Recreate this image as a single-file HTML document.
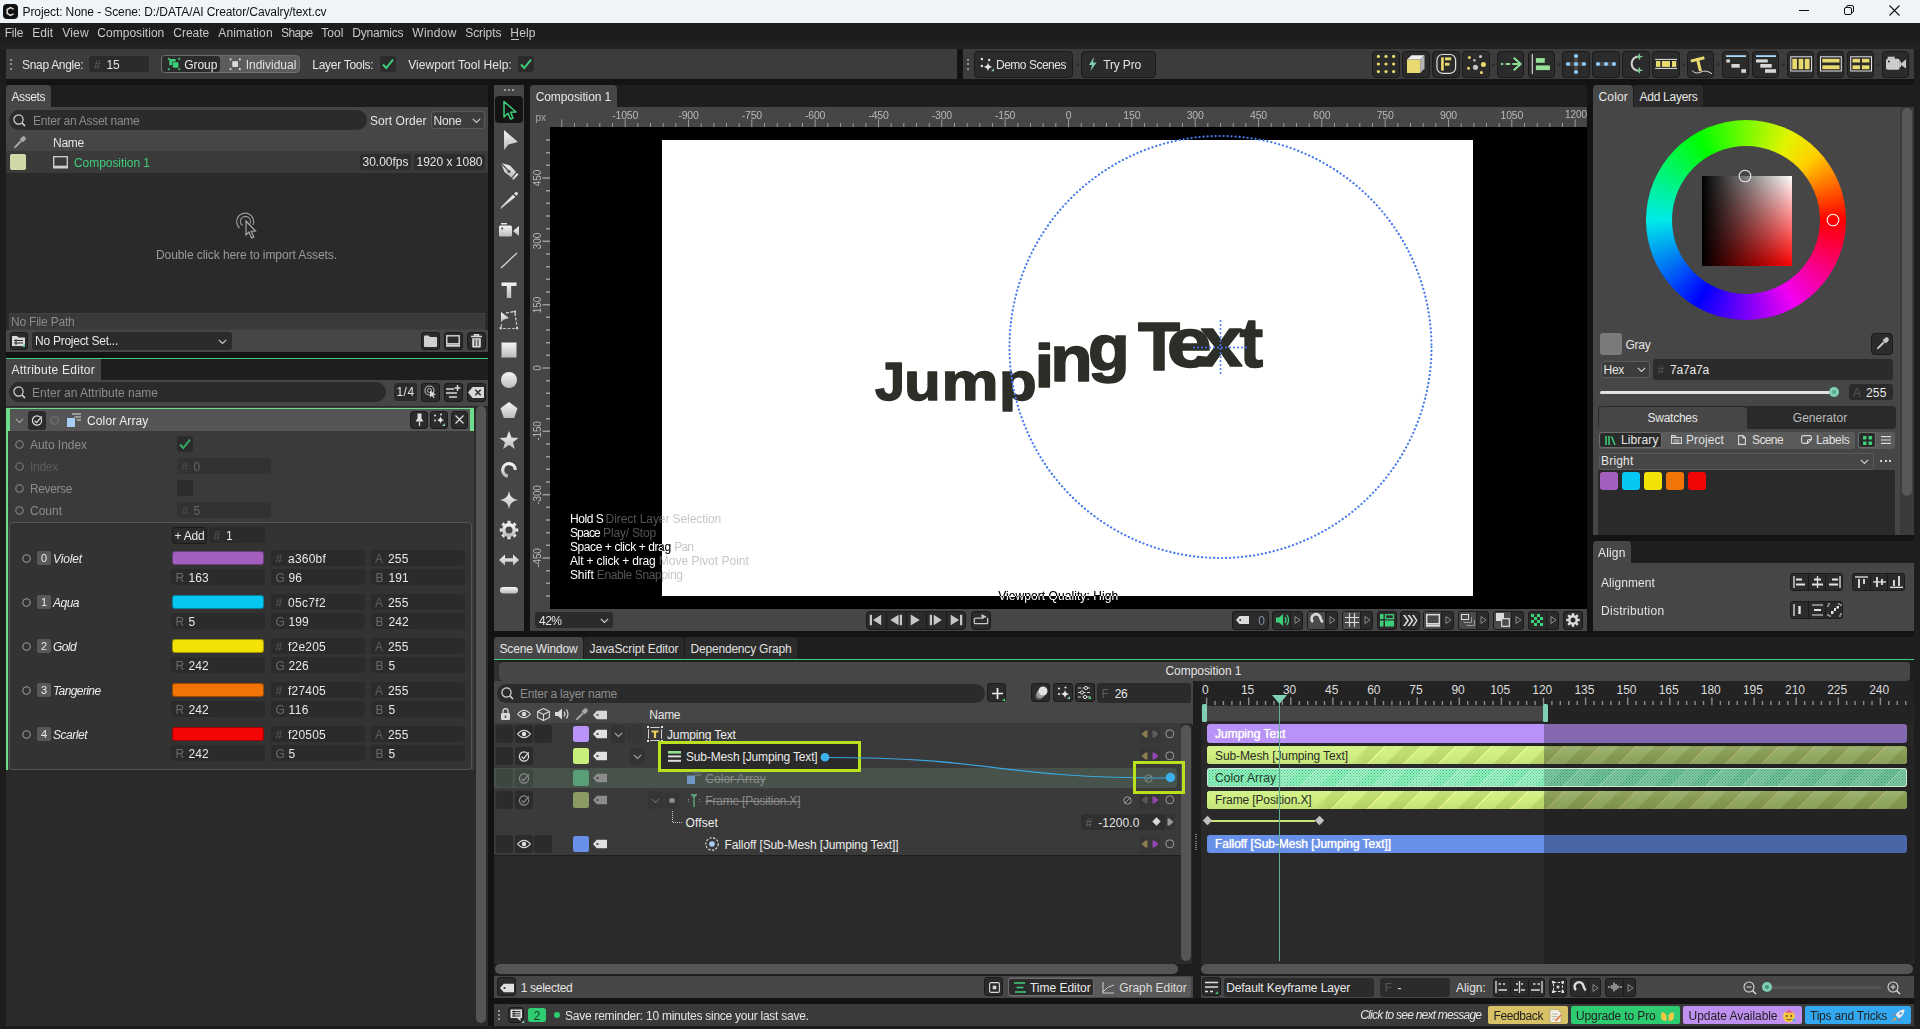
<!DOCTYPE html>
<html><head><meta charset="utf-8"><title>Cavalry</title>
<style>
html,body{margin:0;padding:0;}
body{width:1920px;height:1029px;overflow:hidden;background:#1d1d1d;font-family:"Liberation Sans",sans-serif;position:relative;}
div,svg,span.t{position:absolute;box-sizing:border-box;}
span.t{white-space:nowrap;}
svg{overflow:visible;}
</style></head>
<body>
<div style="left:0px;top:0px;width:1920px;height:23px;background:#eff4f9;"></div>
<div style="left:3px;top:4px;width:15px;height:15px;background:#111;border-radius:4px;"></div>
<svg style="left:3px;top:4px;" width="15" height="15" viewBox="0 0 15 15"><path d="M10.6 5.2 L7.5 3.6 L4.2 5.5 V9.5 L7.5 11.4 L10.6 9.8" fill="none" stroke="#ddd" stroke-width="1.5"/></svg>
<span class="t" style="left:22.50px;top:3.50px;font-size:12px;line-height:16px;color:#111;letter-spacing:-0.099px;">Project: None - Scene: D:/DATA/AI Creator/Cavalry/text.cv</span>
<svg style="left:1799px;top:10px;" width="10" height="1" viewBox="0 0 10 1"><rect width="10" height="1" fill="#111"/></svg>
<svg style="left:1844px;top:5px;" width="10" height="10" viewBox="0 0 10 10"><rect x="0.5" y="2.5" width="7" height="7" rx="1.5" fill="none" stroke="#111"/><path d="M2.5 2.5 V2 Q2.5 .5 4 .5 H8 Q9.5 .5 9.5 2 V6 Q9.5 7.5 8 7.5 H7.5" fill="none" stroke="#111"/></svg>
<svg style="left:1889px;top:4.5px;" width="11" height="11" viewBox="0 0 11 11"><path d="M.5 .5 L10.5 10.5 M10.5 .5 L.5 10.5" stroke="#111" stroke-width="1.1" fill="none"/></svg>
<div style="left:0px;top:23px;width:1920px;height:20px;background:#1d1d1d;"></div>
<div style="left:0px;top:43px;width:1920px;height:6px;background:#222;"></div>
<span class="t" style="left:4.70px;top:24.50px;font-size:12px;line-height:16px;color:#c9c9c9;letter-spacing:-0.186px;">File</span>
<span class="t" style="left:32.30px;top:24.50px;font-size:12px;line-height:16px;color:#c9c9c9;letter-spacing:0.003px;">Edit</span>
<span class="t" style="left:62.30px;top:24.50px;font-size:12px;line-height:16px;color:#c9c9c9;letter-spacing:0.151px;">View</span>
<span class="t" style="left:97.30px;top:24.50px;font-size:12px;line-height:16px;color:#c9c9c9;letter-spacing:0.027px;">Composition</span>
<span class="t" style="left:173.30px;top:24.50px;font-size:12px;line-height:16px;color:#c9c9c9;letter-spacing:-0.005px;">Create</span>
<span class="t" style="left:218.30px;top:24.50px;font-size:12px;line-height:16px;color:#c9c9c9;letter-spacing:0.114px;">Animation</span>
<span class="t" style="left:281.00px;top:24.50px;font-size:12px;line-height:16px;color:#c9c9c9;letter-spacing:-0.601px;">Shape</span>
<span class="t" style="left:321.30px;top:24.50px;font-size:12px;line-height:16px;color:#c9c9c9;letter-spacing:-0.004px;">Tool</span>
<span class="t" style="left:352.30px;top:24.50px;font-size:12px;line-height:16px;color:#c9c9c9;letter-spacing:-0.211px;">Dynamics</span>
<span class="t" style="left:412.30px;top:24.50px;font-size:12px;line-height:16px;color:#c9c9c9;letter-spacing:0.285px;">Window</span>
<span class="t" style="left:465.30px;top:24.50px;font-size:12px;line-height:16px;color:#c9c9c9;letter-spacing:-0.098px;">Scripts</span>
<span class="t" style="left:510.30px;top:24.50px;font-size:12px;line-height:16px;color:#c9c9c9;letter-spacing:0.178px;">Help</span>
<div style="left:510.5px;top:39px;width:8px;height:1px;background:#c9c9c9;"></div>
<div style="left:6px;top:49px;width:951px;height:29.6px;background:#3c3c3c;"></div>
<div style="left:10.2px;top:59.3px;width:2px;height:2px;background:#909090;"></div>
<div style="left:10.2px;top:63.4px;width:2px;height:2px;background:#909090;"></div>
<div style="left:10.2px;top:67.5px;width:2px;height:2px;background:#909090;"></div>
<span class="t" style="left:22.00px;top:56.50px;font-size:12px;line-height:16px;color:#e4e4e4;letter-spacing:-0.312px;">Snap Angle:</span>
<div style="left:89px;top:56px;width:60px;height:16px;background:#2b2b2b;border-radius:3px;"></div>
<span class="t" style="left:94.00px;top:56.50px;font-size:12px;line-height:16px;color:#5e5e5e;letter-spacing:-0.167px;">#</span>
<span class="t" style="left:106.50px;top:56.50px;font-size:12px;line-height:16px;color:#e4e4e4;letter-spacing:-0.280px;">15</span>
<div style="left:161px;top:55px;width:139.3px;height:18px;background:#5c5c5c;border-radius:4px;border:1px solid #6e6e6e;"></div>
<div style="left:162px;top:56px;width:58px;height:16px;background:#2b2b2b;border-radius:3px;"></div>
<svg style="left:0px;top:0px;" width="1920" height="1029" viewBox="0 0 1920 1029"><rect x="167.9" y="57.9" width="1.8" height="1.8" fill="#3ecf7a"/><rect x="167.9" y="68.3" width="1.8" height="1.8" fill="#3ecf7a"/><rect x="178.3" y="57.9" width="1.8" height="1.8" fill="#3ecf7a"/><rect x="178.3" y="68.3" width="1.8" height="1.8" fill="#3ecf7a"/><rect x="169.3" y="59" width="6.3" height="6.2" fill="#3ecf7a"/><rect x="172.5" y="62" width="6.3" height="6" fill="#3ecf7a" stroke="#2b2b2b" stroke-width=".6"/></svg>
<span class="t" style="left:184.30px;top:56.50px;font-size:12px;line-height:16px;color:#e8e8e8;letter-spacing:-0.072px;">Group</span>
<svg style="left:0px;top:0px;" width="1920" height="1029" viewBox="0 0 1920 1029"><rect x="229.6" y="58.5" width="1.8" height="1.8" fill="#e0e0e0"/><rect x="229.6" y="68.2" width="1.8" height="1.8" fill="#e0e0e0"/><rect x="238.9" y="58.5" width="1.8" height="1.8" fill="#e0e0e0"/><rect x="238.9" y="68.2" width="1.8" height="1.8" fill="#e0e0e0"/><rect x="232.3" y="61.2" width="5.7" height="5.7" fill="#dcdcdc"/></svg>
<span class="t" style="left:245.70px;top:56.50px;font-size:12px;line-height:16px;color:#e0e0e0;letter-spacing:-0.010px;">Individual</span>
<span class="t" style="left:312.30px;top:56.50px;font-size:12px;line-height:16px;color:#e4e4e4;letter-spacing:-0.290px;">Layer Tools:</span>
<div style="left:380px;top:56px;width:16px;height:16px;background:#2b2b2b;border-radius:3px;"></div>
<svg style="left:380px;top:56px;" width="16" height="16" viewBox="0 0 16 16"><path d="M3 8.5 L6.3 12 L13 3.6" fill="none" stroke="#3ecf7a" stroke-width="2"/></svg>
<span class="t" style="left:408.30px;top:56.50px;font-size:12px;line-height:16px;color:#e4e4e4;letter-spacing:0.024px;">Viewport Tool Help:</span>
<div style="left:518px;top:56px;width:16px;height:16px;background:#2b2b2b;border-radius:3px;"></div>
<svg style="left:518px;top:56px;" width="16" height="16" viewBox="0 0 16 16"><path d="M3 8.5 L6.3 12 L13 3.6" fill="none" stroke="#3ecf7a" stroke-width="2"/></svg>
<div style="left:957px;top:49px;width:6px;height:29.6px;background:#131313;"></div>
<div style="left:963px;top:49px;width:951px;height:29.6px;background:#3c3c3c;"></div>
<div style="left:966.8px;top:59.3px;width:2px;height:2px;background:#909090;"></div>
<div style="left:966.8px;top:63.4px;width:2px;height:2px;background:#909090;"></div>
<div style="left:966.8px;top:67.5px;width:2px;height:2px;background:#909090;"></div>
<div style="left:974.2px;top:50.5px;width:99.3px;height:27px;background:#2b2b2b;border-radius:4px;border:1px solid #1b1b1b;"></div>
<svg style="left:0px;top:0px;" width="1920" height="1029" viewBox="0 0 1920 1029"><circle cx="981.9" cy="58.9" r="1.25" fill="#ddd"/><circle cx="989.1" cy="60" r="1.25" fill="#ddd"/><circle cx="981.9" cy="66.1" r="1.25" fill="#ddd"/><path d="M988 62.6 Q988.5 66.4 992.3 66.9 Q988.5 67.4 988 71.2 Q987.5 67.4 983.7 66.9 Q987.5 66.4 988 62.6Z" fill="#e4e4e4"/><path d="M994 68.2v3h-3z" fill="#7ecfb3"/></svg>
<span class="t" style="left:996.00px;top:56.50px;font-size:12px;line-height:16px;color:#e4e4e4;letter-spacing:-0.489px;">Demo Scenes</span>
<svg style="left:0px;top:0px;" width="1920" height="1029" viewBox="0 0 1920 1029"><circle cx="1077.5" cy="64.4" r="1.3" fill="#2a2a2a"/></svg>
<div style="left:1081px;top:50.5px;width:74.5px;height:27px;background:#2b2b2b;border-radius:4px;border:1px solid #1b1b1b;"></div>
<svg style="left:1088px;top:57px;" width="9" height="14" viewBox="0 0 9 14"><path d="M6 0 L1 8 H4 L2.5 14 L8.5 5.5 H5 Z" fill="#7ecfb3"/></svg>
<span class="t" style="left:1103.30px;top:56.50px;font-size:12px;line-height:16px;color:#e4e4e4;letter-spacing:-0.170px;">Try Pro</span>
<div style="left:1372.3px;top:50.5px;width:27.3px;height:27px;background:#2b2b2b;border-radius:4px;border:1px solid #1b1b1b;"></div>
<div style="left:1402.3px;top:50.5px;width:27.3px;height:27px;background:#2b2b2b;border-radius:4px;border:1px solid #1b1b1b;"></div>
<div style="left:1432.3px;top:50.5px;width:27.3px;height:27px;background:#2b2b2b;border-radius:4px;border:1px solid #1b1b1b;"></div>
<div style="left:1462.3px;top:50.5px;width:27.3px;height:27px;background:#2b2b2b;border-radius:4px;border:1px solid #1b1b1b;"></div>
<div style="left:1496.8px;top:50.5px;width:27.3px;height:27px;background:#2b2b2b;border-radius:4px;border:1px solid #1b1b1b;"></div>
<div style="left:1527.8px;top:50.5px;width:27.3px;height:27px;background:#2b2b2b;border-radius:4px;border:1px solid #1b1b1b;"></div>
<div style="left:1562.3px;top:50.5px;width:27.3px;height:27px;background:#2b2b2b;border-radius:4px;border:1px solid #1b1b1b;"></div>
<div style="left:1592.3px;top:50.5px;width:27.3px;height:27px;background:#2b2b2b;border-radius:4px;border:1px solid #1b1b1b;"></div>
<div style="left:1622.3px;top:50.5px;width:27.3px;height:27px;background:#2b2b2b;border-radius:4px;border:1px solid #1b1b1b;"></div>
<div style="left:1652.3px;top:50.5px;width:27.3px;height:27px;background:#2b2b2b;border-radius:4px;border:1px solid #1b1b1b;"></div>
<div style="left:1686.8px;top:50.5px;width:27.3px;height:27px;background:#2b2b2b;border-radius:4px;border:1px solid #1b1b1b;"></div>
<div style="left:1721.8px;top:50.5px;width:27.3px;height:27px;background:#2b2b2b;border-radius:4px;border:1px solid #1b1b1b;"></div>
<div style="left:1751.8px;top:50.5px;width:27.3px;height:27px;background:#2b2b2b;border-radius:4px;border:1px solid #1b1b1b;"></div>
<div style="left:1786.8px;top:50.5px;width:27.3px;height:27px;background:#2b2b2b;border-radius:4px;border:1px solid #1b1b1b;"></div>
<div style="left:1816.8px;top:50.5px;width:27.3px;height:27px;background:#2b2b2b;border-radius:4px;border:1px solid #1b1b1b;"></div>
<div style="left:1846.8px;top:50.5px;width:27.3px;height:27px;background:#2b2b2b;border-radius:4px;border:1px solid #1b1b1b;"></div>
<div style="left:1881.8px;top:50.5px;width:27.3px;height:27px;background:#2b2b2b;border-radius:4px;border:1px solid #1b1b1b;"></div>
<svg style="left:0px;top:0px;" width="1920" height="1029" viewBox="0 0 1920 1029"><circle cx="1493.3" cy="64.4" r="1.3" fill="#2a2a2a"/><circle cx="1558.7" cy="64.4" r="1.3" fill="#2a2a2a"/><circle cx="1683.5" cy="64.4" r="1.3" fill="#2a2a2a"/><circle cx="1718.5" cy="64.4" r="1.3" fill="#2a2a2a"/><circle cx="1783.3" cy="64.4" r="1.3" fill="#2a2a2a"/><circle cx="1878.3" cy="64.4" r="1.3" fill="#2a2a2a"/></svg>
<svg style="left:0px;top:0px;" width="1920" height="1029" viewBox="0 0 1920 1029"><circle cx="1378.4" cy="56.4" r="1.6" fill="#e8da6e"/><circle cx="1386" cy="56.4" r="1.6" fill="#e8da6e"/><circle cx="1393.6" cy="56.4" r="1.6" fill="#e8da6e"/><circle cx="1378.4" cy="64" r="1.6" fill="#e8da6e"/><circle cx="1386" cy="64" r="1.6" fill="#e8da6e"/><circle cx="1393.6" cy="64" r="1.6" fill="#e8da6e"/><circle cx="1378.4" cy="71.6" r="1.6" fill="#e8da6e"/><circle cx="1386" cy="71.6" r="1.6" fill="#e8da6e"/><circle cx="1393.6" cy="71.6" r="1.6" fill="#e8da6e"/><rect x="1407" y="59.6" width="13.20" height="13.40" fill="#e8da6e" /><path d="M1407 59.6 L1411.5 55.2 H1424.5 L1420.2 59.6Z" fill="#f0f0f0" /><path d="M1420.2 59.6 L1424.5 55.2 V68.6 L1420.2 73Z" fill="#b4b4b4" /><rect x="1437" y="54.5" width="18.6" height="18.8" rx="5.5" fill="none" stroke="#e0e0e0" stroke-width="1.2"/><rect x="1441.1" y="57.4" width="2.70" height="13.20" fill="#e8da6e" /><rect x="1445" y="57.4" width="6.20" height="2.90" fill="#e8da6e" /><rect x="1445" y="62.8" width="4.40" height="2.90" fill="#e8da6e" /><circle cx="1469.4" cy="57.5" r="1.5" fill="#e8da6e"/><circle cx="1480.5" cy="56.4" r="1.5" fill="#d0d0d0"/><circle cx="1474.4" cy="60.3" r="1.4" fill="#b8b8b8"/><circle cx="1483.4" cy="64.4" r="2.5" fill="#e8da6e"/><circle cx="1475.5" cy="67.3" r="2.6" fill="#c4c4c4"/><circle cx="1468.5" cy="68.3" r="1.5" fill="#e8da6e"/><circle cx="1481.4" cy="72.4" r="1.5" fill="#e8da6e"/><path d="M1501 64H1503.2M1505.7 64H1510.1M1512.3 64H1520" fill="none" stroke="#90de90" stroke-width="2" /><path d="M1513.8 57.8L1520.6 64L1513.8 70.2" fill="none" stroke="#90de90" stroke-width="2" /><path d="M1532.3 54V74" fill="none" stroke="#e0e0e0" stroke-width="1.1" /><rect x="1535.9" y="58.1" width="8.90" height="4.70" fill="#98e298" /><rect x="1535.9" y="65.4" width="14.00" height="4.70" fill="#98e298" /><path d="M1568 64H1584M1576 56V72" fill="none" stroke="#474747" stroke-width="4" /><circle cx="1576" cy="64" r="2.1" fill="#8ccafa"/><circle cx="1576" cy="56" r="2.1" fill="#8ccafa"/><circle cx="1576" cy="72" r="2.1" fill="#8ccafa"/><circle cx="1568" cy="64" r="2.1" fill="#8ccafa"/><circle cx="1584" cy="64" r="2.1" fill="#8ccafa"/><path d="M1598 64H1614" fill="none" stroke="#474747" stroke-width="4" /><circle cx="1598" cy="64" r="2.1" fill="#8ccafa"/><circle cx="1606" cy="64" r="2.1" fill="#8ccafa"/><circle cx="1614" cy="64" r="2.1" fill="#8ccafa"/><path d="M1638.8 56.4 A7.2 7.2 0 0 0 1638.8 70.8" fill="none" stroke="#d4d4d4" stroke-width="2" /><path d="M1636.4 56.6H1642.4M1639.4 53.8V59.4M1636.4 70.4H1642.4M1639.4 67.6V73.2" fill="none" stroke="#7ed090" stroke-width="1.4" /><path d="M1655.2 59.4H1677M1655.2 68.4H1677" fill="none" stroke="#e4e4e4" stroke-width="1" /><rect x="1656" y="61" width="4.30" height="5.90" fill="#e8da6e" /><rect x="1661.9" y="61" width="8.10" height="5.90" fill="#e8da6e" /><rect x="1672" y="61" width="4.20" height="5.90" fill="#e8da6e" /><g transform="rotate(-14 1700 63)"><rect x="1691.5" y="57.5" width="14" height="2.9" fill="#e8da6e"/><rect x="1697" y="57.5" width="3" height="13.5" fill="#e8da6e"/></g><path d="M1692.3 70.8 Q1696 74.5 1701 72 T1712 73.8" fill="none" stroke="#dcdcdc" stroke-width="1" /><rect x="1726" y="55.2" width="20.00" height="1.80" fill="#a8d8fa" /><rect x="1726.3" y="59.4" width="3.60" height="3.10" fill="#d8d8d8" /><rect x="1731.4" y="64" width="8.30" height="3.70" fill="#d8d8d8" /><rect x="1741.3" y="69.2" width="4.70" height="3.60" fill="#d8d8d8" /><rect x="1756" y="55.2" width="20.00" height="1.80" fill="#a8d8fa" /><rect x="1756" y="59.4" width="11.80" height="3.10" fill="#d8d8d8" /><rect x="1760.3" y="64" width="11.40" height="3.70" fill="#d8d8d8" /><rect x="1765" y="69.2" width="11.00" height="3.60" fill="#d8d8d8" /><rect x="1790.8" y="56.8" width="20.8" height="14.2" fill="none" stroke="#e4e4e4" stroke-width="1"/><rect x="1820.5" y="56.8" width="20.8" height="14.2" fill="none" stroke="#e4e4e4" stroke-width="1"/><rect x="1850.7" y="56.8" width="20.8" height="14.2" fill="none" stroke="#e4e4e4" stroke-width="1"/><rect x="1792.3" y="58.8" width="4.70" height="10.40" fill="#e8da6e" /><rect x="1798.6" y="58.8" width="4.70" height="10.40" fill="#e8da6e" /><rect x="1804.8" y="58.8" width="4.70" height="10.40" fill="#e8da6e" /><rect x="1822.3" y="58.8" width="17.20" height="3.70" fill="#e8da6e" /><rect x="1822.3" y="65.3" width="17.20" height="3.90" fill="#e8da6e" /><rect x="1852.5" y="58.8" width="7.50" height="3.70" fill="#e8da6e" /><rect x="1852.5" y="65.3" width="7.50" height="3.90" fill="#e8da6e" /><rect x="1861.9" y="58.8" width="7.50" height="3.70" fill="#e8da6e" /><rect x="1861.9" y="65.3" width="7.50" height="3.90" fill="#e8da6e" /><rect x="1886" y="58.8" width="13.7" height="10.9" rx="1.8" fill="#cccccc"/><rect x="1887.7" y="56.7" width="7.00" height="2.20" fill="#cccccc" /><path d="M1900.2 64.2 L1906 59.2 V68.6Z" fill="#cccccc" /><path d="M1899.5 61.5H1901V67H1899.5Z" fill="#cccccc" /><circle cx="1888.9" cy="61.5" r="1" fill="#2b2b2b"/></svg>
<div style="left:6px;top:78.6px;width:1908px;height:947.4px;background:#131313;"></div>
<div style="left:6px;top:85px;width:482px;height:22px;background:#1e1e1e;"></div>
<div style="left:6px;top:85px;width:45px;height:23px;background:#464646;border-radius:4px 4px 0 0;"></div>
<span class="t" style="left:11.50px;top:88.50px;font-size:12px;line-height:16px;color:#e8e8e8;letter-spacing:-0.419px;">Assets</span>
<div style="left:6px;top:107px;width:482px;height:26px;background:#464646;"></div>
<div style="left:8.5px;top:110px;width:358.3px;height:20px;background:#2b2b2b;border-radius:10px;"></div>
<svg style="left:13px;top:113.5px;" width="13" height="13" viewBox="0 0 13 13"><circle cx="5.5" cy="5.5" r="4.6" fill="none" stroke="#d8d8d8" stroke-width="1.2"/><path d="M9 9 L12 12" stroke="#d8d8d8" stroke-width="1.6"/></svg>
<span class="t" style="left:33.00px;top:112.50px;font-size:12px;line-height:16px;color:#8c8c8c;letter-spacing:-0.258px;">Enter an Asset name</span>
<span class="t" style="left:370.00px;top:112.50px;font-size:12px;line-height:16px;color:#e4e4e4;letter-spacing:0.048px;">Sort Order</span>
<div style="left:430.5px;top:111px;width:54px;height:18px;background:#3c3c3c;border-radius:3px;border:1px solid #5a5a5a;"></div>
<span class="t" style="left:433.50px;top:112.50px;font-size:12px;line-height:16px;color:#e4e4e4;letter-spacing:-0.172px;">None</span>
<svg style="left:471.5px;top:118px;" width="9" height="6" viewBox="0 0 9 6"><path d="M.8 .8 L4.5 4.5 L8.2 .8" fill="none" stroke="#d0d0d0" stroke-width="1.1"/></svg>
<div style="left:6px;top:133px;width:482px;height:18.2px;background:#464646;"></div>
<svg style="left:13px;top:136px;" width="13" height="13" viewBox="0 0 13 13"><path d="M9.2 1.2 a1.9 1.9 0 0 1 2.7 2.7 L9.8 6 L7.1 3.3Z M7.6 4.6 L2.2 10 L1.2 12 L3.2 11 L8.6 5.6" fill="#a8a8a8" stroke="#a8a8a8" stroke-width=".8"/></svg>
<span class="t" style="left:53.00px;top:134.50px;font-size:12px;line-height:16px;color:#e4e4e4;letter-spacing:-0.254px;">Name</span>
<div style="left:6px;top:151.2px;width:482px;height:21.8px;background:#3a3a3a;"></div>
<div style="left:10px;top:154px;width:16px;height:16px;background:#d0d8a8;border-radius:2px;"></div>
<svg style="left:53px;top:155.5px;" width="15" height="13" viewBox="0 0 15 13"><rect x=".7" y=".7" width="13.6" height="9.6" fill="none" stroke="#d0d0d0" stroke-width="1.3"/><rect x="0" y="10.5" width="15" height="2" fill="#d0d0d0"/></svg>
<span class="t" style="left:74.00px;top:154.50px;font-size:12px;line-height:16px;color:#3ecf7a;letter-spacing:-0.055px;">Composition 1</span>
<div style="left:360px;top:154px;width:51px;height:16px;background:#2d2d2d;border-radius:3px;"></div>
<span class="t" style="left:362.50px;top:154.00px;font-size:12px;line-height:16px;color:#e4e4e4;letter-spacing:-0.006px;">30.00fps</span>
<div style="left:414px;top:154px;width:71px;height:16px;background:#2d2d2d;border-radius:3px;"></div>
<span class="t" style="left:416.50px;top:154.00px;font-size:12px;line-height:16px;color:#e4e4e4;letter-spacing:-0.006px;">1920 x 1080</span>
<div style="left:6px;top:173px;width:482px;height:158px;background:#2a2a2a;"></div>
<svg style="left:234px;top:211px;" width="26" height="30" viewBox="0 0 26 30"><path d="M5.5 17 A8.5 8.5 0 1 1 19 14" fill="none" stroke="#9a9a9a" stroke-width="1.2"/><path d="M8.5 14.5 A5 5 0 1 1 16 12.5" fill="none" stroke="#9a9a9a" stroke-width="1.2"/><path d="M12 10 V24 L15 21 L17.5 27 L19.8 26 L17.3 20.3 L21.5 20Z" fill="#2a2a2a" stroke="#b0b0b0" stroke-width="1.1"/></svg>
<span class="t" style="left:156.00px;top:247.00px;font-size:12px;line-height:16px;color:#9a9a9a;letter-spacing:-0.088px;">Double click here to import Assets.</span>
<div style="left:9px;top:312.5px;width:476px;height:17px;background:#3a3a3a;border:1px solid #404040;"></div>
<span class="t" style="left:11.00px;top:313.70px;font-size:12px;line-height:16px;color:#8a8a8a;letter-spacing:-0.211px;">No File Path</span>
<div style="left:6px;top:330px;width:482px;height:21.6px;background:#464646;"></div>
<div style="left:9.5px;top:331.6px;width:18.5px;height:18.6px;background:#2b2b2b;border-radius:3px;border:1px solid #1b1b1b;"></div>
<svg style="left:12.3px;top:334.3px;" width="13" height="13" viewBox="0 0 13 13"><path d="M0 2 H5 L6.5 3.5 H13 V12 H0Z" fill="#d8d8d8"/><path d="M2 6.5H11M2 9H11M4 5.2V11" stroke="#2b2b2b" stroke-width="1"/><path d="M13 10v3h-3z" fill="#3ecf7a"/></svg>
<div style="left:32px;top:332.3px;width:200px;height:17.5px;background:#2b2b2b;border-radius:3px;"></div>
<span class="t" style="left:35.00px;top:333.30px;font-size:12px;line-height:16px;color:#e8e8e8;letter-spacing:-0.257px;">No Project Set...</span>
<svg style="left:218px;top:338.5px;" width="9" height="6" viewBox="0 0 9 6"><path d="M.8 .8 L4.5 4.5 L8.2 .8" fill="none" stroke="#d0d0d0" stroke-width="1.1"/></svg>
<div style="left:420.5px;top:331.6px;width:19px;height:18.6px;background:#2b2b2b;border-radius:3px;border:1px solid #1b1b1b;"></div>
<div style="left:443.5px;top:331.6px;width:19px;height:18.6px;background:#2b2b2b;border-radius:3px;border:1px solid #1b1b1b;"></div>
<div style="left:466.5px;top:331.6px;width:19px;height:18.6px;background:#2b2b2b;border-radius:3px;border:1px solid #1b1b1b;"></div>
<svg style="left:423.5px;top:334.6px;" width="13" height="12" viewBox="0 0 13 12"><path d="M0 1.5 Q0 .5 1 .5 H4.5 L6 2 H12 Q13 2 13 3 V11 Q13 12 12 12 H1 Q0 12 0 11Z" fill="#d0d0d0"/></svg>
<svg style="left:446px;top:334.6px;" width="14" height="12" viewBox="0 0 14 12"><rect x=".8" y=".8" width="12.4" height="8" fill="none" stroke="#d8d8d8" stroke-width="1.4"/><rect x="0" y="9.5" width="14" height="2.2" fill="#d8d8d8"/></svg>
<svg style="left:470.5px;top:333.8px;" width="11" height="14" viewBox="0 0 11 14"><path d="M0 2.5H11M3.5 2.5V.7H7.5V2.5" stroke="#d8d8d8" stroke-width="1.4" fill="none"/><path d="M1.2 4.2H9.8V12.5Q9.8 13.5 8.8 13.5H2.2Q1.2 13.5 1.2 12.5Z" fill="#d8d8d8"/><path d="M4 5.5V12M7 5.5V12" stroke="#2b2b2b" stroke-width="1.1"/></svg>
<div style="left:6px;top:358px;width:482px;height:1px;background:#3ecf7a;"></div>
<div style="left:6px;top:359px;width:482px;height:21px;background:#1e1e1e;"></div>
<div style="left:6px;top:359px;width:95px;height:21px;background:#464646;"></div>
<span class="t" style="left:11.50px;top:361.50px;font-size:12px;line-height:16px;color:#e8e8e8;letter-spacing:0.258px;">Attribute Editor</span>
<div style="left:6px;top:380px;width:482px;height:26px;background:#464646;"></div>
<div style="left:8.5px;top:382.3px;width:377.5px;height:19.9px;background:#2b2b2b;border-radius:10px;"></div>
<svg style="left:13px;top:385.8px;" width="13" height="13" viewBox="0 0 13 13"><circle cx="5.5" cy="5.5" r="4.6" fill="none" stroke="#d8d8d8" stroke-width="1.2"/><path d="M9 9 L12 12" stroke="#d8d8d8" stroke-width="1.6"/></svg>
<span class="t" style="left:32.00px;top:384.50px;font-size:12px;line-height:16px;color:#8c8c8c;letter-spacing:-0.003px;">Enter an Attribute name</span>
<div style="left:394px;top:382.8px;width:23px;height:18.6px;background:#2b2b2b;border-radius:3px;"></div>
<span class="t" style="left:396.50px;top:384.20px;font-size:12px;line-height:16px;color:#e4e4e4;letter-spacing:0.438px;">1/4</span>
<div style="left:420.5px;top:382.6px;width:19px;height:19px;background:#2b2b2b;border-radius:3px;border:1px solid #1b1b1b;"></div>
<div style="left:443.5px;top:382.6px;width:19px;height:19px;background:#2b2b2b;border-radius:3px;border:1px solid #1b1b1b;"></div>
<div style="left:466.5px;top:382.6px;width:19px;height:19px;background:#2b2b2b;border-radius:3px;border:1px solid #1b1b1b;"></div>
<svg style="left:423.5px;top:385.4px;" width="13" height="13" viewBox="0 0 13 13"><circle cx="5.5" cy="5.5" r="4.5" fill="none" stroke="#bdbdbd" stroke-width="1.1"/><circle cx="5.5" cy="5.5" r="2" fill="none" stroke="#bdbdbd" stroke-width="1"/><path d="M6 5.5 V12.5 L8 10.7 L9.3 13 L10.6 12.3 L9.4 10 L12 9.8Z" fill="#d8d8d8"/></svg>
<svg style="left:446px;top:385px;" width="14" height="14" viewBox="0 0 14 14"><path d="M0 4H8M0 8H11M3 12H11" stroke="#d8d8d8" stroke-width="1.7"/><path d="M11.5 0V6M8.5 3H14.5" stroke="#d8d8d8" stroke-width="1.5"/></svg>
<svg style="left:468px;top:386.5px;" width="16" height="11" viewBox="0 0 16 11"><path d="M0 5.5 L4.5 0 H16 V11 H4.5Z" fill="#d8d8d8"/><path d="M7.3 2.8 L12.7 8.2 M12.7 2.8 L7.3 8.2" stroke="#2b2b2b" stroke-width="1.5"/></svg>
<div style="left:6px;top:406px;width:482px;height:620px;background:#2a2a2a;"></div>
<div style="left:476px;top:405.5px;width:10px;height:617.5px;background:#555;border-radius:5px;"></div>
<div style="left:6px;top:407px;width:468px;height:363px;background:#3a3a3a;"></div>
<div style="left:6.2px;top:408px;width:1.5px;height:362px;background:#6fdc8c;"></div>
<div style="left:6.2px;top:408px;width:4px;height:23px;background:#6fdc8c;"></div>
<div style="left:10.2px;top:408px;width:459.8px;height:23px;background:#555;"></div>
<div style="left:6.2px;top:407.6px;width:467.8px;height:1.3px;background:#6fdc8c;border-radius:2px 2px 0 0;"></div>
<div style="left:470px;top:408px;width:4px;height:23px;background:#6fdc8c;"></div>
<svg style="left:14.8px;top:417.5px;" width="9" height="6" viewBox="0 0 9 6"><path d="M.8 .8 L4.5 4.5 L8.2 .8" fill="none" stroke="#a4a4a4" stroke-width="1.1"/></svg>
<div style="left:28px;top:410.5px;width:18px;height:19px;background:#2b2b2b;border-radius:3px;"></div>
<svg style="left:31px;top:413.5px;" width="12" height="12" viewBox="0 0 12 12"><circle cx="6" cy="6.5" r="4.6" fill="none" stroke="#e0e0e0" stroke-width="1.2"/><path d="M3.6 6.6 L5.6 8.6 L10.8 2.4" fill="none" stroke="#e0e0e0" stroke-width="1.3"/></svg>
<svg style="left:50px;top:415.5px;" width="9" height="9" viewBox="0 0 9 9"><circle cx="4.5" cy="4.5" r="3.8" fill="none" stroke="#787878" stroke-width="1.1"/></svg>
<svg style="left:67px;top:412.5px;" width="15" height="14" viewBox="0 0 15 14"><rect x="0" y="5" width="8" height="9" fill="#a9cff5"/><path d="M5 1H14M7.5 4H14M9.5 7H14" stroke="#e0e0e0" stroke-width="1.2"/></svg>
<span class="t" style="left:87.00px;top:412.50px;font-size:12px;line-height:16px;color:#f0f0f0;letter-spacing:0.134px;">Color Array</span>
<div style="left:410px;top:410.5px;width:17.5px;height:18px;background:#2b2b2b;border-radius:3px;border:1px solid #1b1b1b;"></div>
<div style="left:430px;top:410.5px;width:17.5px;height:18px;background:#2b2b2b;border-radius:3px;border:1px solid #1b1b1b;"></div>
<div style="left:450.5px;top:410.5px;width:17.5px;height:18px;background:#2b2b2b;border-radius:3px;border:1px solid #1b1b1b;"></div>
<svg style="left:414.5px;top:413px;" width="9" height="13" viewBox="0 0 9 13"><path d="M2.5 .5H6.5V5.5L8.5 8.5H.5L2.5 5.5Z" fill="#e0e0e0"/><path d="M4.5 8.5V13" stroke="#e0e0e0" stroke-width="1.2"/></svg>
<svg style="left:433px;top:413px;" width="12" height="13" viewBox="0 0 12 13"><circle cx="2" cy="2.5" r="1" fill="#e0e0e0"/><circle cx="8" cy="1.5" r="1" fill="#e0e0e0"/><circle cx="2" cy="7.5" r="1" fill="#e0e0e0"/><path d="M7.5 3.2Q8 6.5 11.3 7Q8 7.5 7.5 10.8Q7 7.5 3.7 7Q7 6.5 7.5 3.2Z" fill="#e8e8e8"/><path d="M12 10v3h-3z" fill="#7ecfb3"/></svg>
<svg style="left:454.5px;top:415px;" width="9" height="9" viewBox="0 0 9 9"><path d="M.5 .5L8.5 8.5M8.5 .5L.5 8.5" stroke="#e0e0e0" stroke-width="1.2"/></svg>
<svg style="left:14.5px;top:439.5px;" width="9" height="9" viewBox="0 0 9 9"><circle cx="4.5" cy="4.5" r="3.7" fill="none" stroke="#8a8a8a" stroke-width="1.1"/></svg>
<span class="t" style="left:30.00px;top:436.50px;font-size:12px;line-height:16px;color:#8c8c8c;letter-spacing:-0.037px;">Auto Index</span>
<div style="left:177px;top:436px;width:16px;height:16px;background:#2b2b2b;border-radius:3px;"></div>
<svg style="left:177px;top:436px;" width="16" height="16" viewBox="0 0 16 16"><path d="M3 8.5 L6.3 12 L13 3.6" fill="none" stroke="#36a862" stroke-width="2"/></svg>
<svg style="left:14.5px;top:461.5px;" width="9" height="9" viewBox="0 0 9 9"><circle cx="4.5" cy="4.5" r="3.7" fill="none" stroke="#7a7a7a" stroke-width="1.1"/></svg>
<span class="t" style="left:30.00px;top:458.50px;font-size:12px;line-height:16px;color:#5c5c5c;letter-spacing:-0.272px;">Index</span>
<div style="left:177px;top:458px;width:94px;height:16px;background:#323232;border-radius:3px;"></div>
<span class="t" style="left:181.50px;top:458.50px;font-size:12px;line-height:16px;color:#4e4e4e;letter-spacing:-0.167px;">#</span>
<span class="t" style="left:193.50px;top:458.50px;font-size:12px;line-height:16px;color:#666;letter-spacing:-0.167px;">0</span>
<svg style="left:14.5px;top:483.5px;" width="9" height="9" viewBox="0 0 9 9"><circle cx="4.5" cy="4.5" r="3.7" fill="none" stroke="#8a8a8a" stroke-width="1.1"/></svg>
<span class="t" style="left:30.00px;top:480.50px;font-size:12px;line-height:16px;color:#8c8c8c;letter-spacing:-0.384px;">Reverse</span>
<div style="left:177px;top:480px;width:16px;height:16px;background:#2b2b2b;border-radius:3px;"></div>
<svg style="left:14.5px;top:505.5px;" width="9" height="9" viewBox="0 0 9 9"><circle cx="4.5" cy="4.5" r="3.7" fill="none" stroke="#8a8a8a" stroke-width="1.1"/></svg>
<span class="t" style="left:30.00px;top:502.50px;font-size:12px;line-height:16px;color:#8c8c8c;letter-spacing:-0.006px;">Count</span>
<div style="left:177px;top:502px;width:94px;height:16px;background:#323232;border-radius:3px;"></div>
<span class="t" style="left:181.50px;top:502.50px;font-size:12px;line-height:16px;color:#4e4e4e;letter-spacing:-0.167px;">#</span>
<span class="t" style="left:193.50px;top:502.50px;font-size:12px;line-height:16px;color:#666;letter-spacing:-0.167px;">5</span>
<div style="left:9px;top:522px;width:463px;height:248px;background:#333;border-radius:4px;border:1px solid #555;"></div>
<div style="left:171.5px;top:527px;width:35px;height:16.5px;background:#2b2b2b;border-radius:3px;border:1px solid #1b1b1b;"></div>
<span class="t" style="left:174.50px;top:527.50px;font-size:12px;line-height:16px;color:#e8e8e8;letter-spacing:-0.206px;">+ Add</span>
<div style="left:209px;top:527px;width:56px;height:16px;background:#2b2b2b;border-radius:3px;"></div>
<span class="t" style="left:213.50px;top:527.50px;font-size:12px;line-height:16px;color:#5a5a5a;letter-spacing:-0.167px;">#</span>
<span class="t" style="left:226.00px;top:527.50px;font-size:12px;line-height:16px;color:#e8e8e8;letter-spacing:-0.167px;">1</span>
<svg style="left:21.5px;top:553.5px;" width="9" height="9" viewBox="0 0 9 9"><circle cx="4.5" cy="4.5" r="3.7" fill="none" stroke="#9a9a9a" stroke-width="1.1"/></svg>
<div style="left:37px;top:551.4px;width:14px;height:13.4px;background:#585858;border-radius:2px;"></div>
<span class="t" style="left:41.01px;top:551.00px;font-size:11px;line-height:15px;color:#e8e8e8;letter-spacing:-0.153px;">0</span>
<span class="t" style="left:53.00px;top:550.50px;font-size:12px;line-height:16px;color:#ececec;letter-spacing:-0.135px;font-style:italic;">Violet</span>
<div style="left:172px;top:551.3px;width:92px;height:13.5px;background:#a360bf;border-radius:3px;border:1px solid rgba(0,0,0,.35);"></div>
<div style="left:271px;top:550px;width:94px;height:16px;background:#2b2b2b;border-radius:3px;"></div>
<span class="t" style="left:275.50px;top:550.50px;font-size:12px;line-height:16px;color:#5a5a5a;letter-spacing:-0.167px;">#</span>
<span class="t" style="left:288.00px;top:550.50px;font-size:12px;line-height:16px;color:#e8e8e8;letter-spacing:0.216px;">a360bf</span>
<div style="left:371px;top:550px;width:94px;height:16px;background:#2b2b2b;border-radius:3px;"></div>
<span class="t" style="left:375.00px;top:550.50px;font-size:12px;line-height:16px;color:#5e5e5e;letter-spacing:-0.200px;">A</span>
<span class="t" style="left:388.00px;top:550.50px;font-size:12px;line-height:16px;color:#e8e8e8;letter-spacing:0.156px;">255</span>
<div style="left:171px;top:569px;width:94px;height:16px;background:#2b2b2b;border-radius:3px;"></div>
<span class="t" style="left:175.50px;top:569.50px;font-size:12px;line-height:16px;color:#6a6a6a;letter-spacing:-0.217px;">R</span>
<span class="t" style="left:188.50px;top:569.50px;font-size:12px;line-height:16px;color:#e8e8e8;letter-spacing:0.123px;">163</span>
<div style="left:271px;top:569px;width:94px;height:16px;background:#2b2b2b;border-radius:3px;"></div>
<span class="t" style="left:275.50px;top:569.50px;font-size:12px;line-height:16px;color:#6a6a6a;letter-spacing:-0.234px;">G</span>
<span class="t" style="left:288.50px;top:569.50px;font-size:12px;line-height:16px;color:#e8e8e8;letter-spacing:0.120px;">96</span>
<div style="left:371px;top:569px;width:94px;height:16px;background:#2b2b2b;border-radius:3px;"></div>
<span class="t" style="left:375.50px;top:569.50px;font-size:12px;line-height:16px;color:#6a6a6a;letter-spacing:-0.200px;">B</span>
<span class="t" style="left:388.50px;top:569.50px;font-size:12px;line-height:16px;color:#e8e8e8;letter-spacing:0.123px;">191</span>
<svg style="left:21.5px;top:597.5px;" width="9" height="9" viewBox="0 0 9 9"><circle cx="4.5" cy="4.5" r="3.7" fill="none" stroke="#9a9a9a" stroke-width="1.1"/></svg>
<div style="left:37px;top:595.4px;width:14px;height:13.4px;background:#585858;border-radius:2px;"></div>
<span class="t" style="left:41.01px;top:595.00px;font-size:11px;line-height:15px;color:#e8e8e8;letter-spacing:-0.153px;">1</span>
<span class="t" style="left:53.00px;top:594.50px;font-size:12px;line-height:16px;color:#ececec;letter-spacing:-0.508px;font-style:italic;">Aqua</span>
<div style="left:172px;top:595.3px;width:92px;height:13.5px;background:#05c7f2;border-radius:3px;border:1px solid rgba(0,0,0,.35);"></div>
<div style="left:271px;top:594px;width:94px;height:16px;background:#2b2b2b;border-radius:3px;"></div>
<span class="t" style="left:275.50px;top:594.50px;font-size:12px;line-height:16px;color:#5a5a5a;letter-spacing:-0.167px;">#</span>
<span class="t" style="left:288.00px;top:594.50px;font-size:12px;line-height:16px;color:#e8e8e8;letter-spacing:0.328px;">05c7f2</span>
<div style="left:371px;top:594px;width:94px;height:16px;background:#2b2b2b;border-radius:3px;"></div>
<span class="t" style="left:375.00px;top:594.50px;font-size:12px;line-height:16px;color:#5e5e5e;letter-spacing:-0.200px;">A</span>
<span class="t" style="left:388.00px;top:594.50px;font-size:12px;line-height:16px;color:#e8e8e8;letter-spacing:0.156px;">255</span>
<div style="left:171px;top:613px;width:94px;height:16px;background:#2b2b2b;border-radius:3px;"></div>
<span class="t" style="left:175.50px;top:613.50px;font-size:12px;line-height:16px;color:#6a6a6a;letter-spacing:-0.217px;">R</span>
<span class="t" style="left:188.50px;top:613.50px;font-size:12px;line-height:16px;color:#e8e8e8;letter-spacing:0.112px;">5</span>
<div style="left:271px;top:613px;width:94px;height:16px;background:#2b2b2b;border-radius:3px;"></div>
<span class="t" style="left:275.50px;top:613.50px;font-size:12px;line-height:16px;color:#6a6a6a;letter-spacing:-0.234px;">G</span>
<span class="t" style="left:288.50px;top:613.50px;font-size:12px;line-height:16px;color:#e8e8e8;letter-spacing:0.123px;">199</span>
<div style="left:371px;top:613px;width:94px;height:16px;background:#2b2b2b;border-radius:3px;"></div>
<span class="t" style="left:375.50px;top:613.50px;font-size:12px;line-height:16px;color:#6a6a6a;letter-spacing:-0.200px;">B</span>
<span class="t" style="left:388.50px;top:613.50px;font-size:12px;line-height:16px;color:#e8e8e8;letter-spacing:0.123px;">242</span>
<svg style="left:21.5px;top:641.5px;" width="9" height="9" viewBox="0 0 9 9"><circle cx="4.5" cy="4.5" r="3.7" fill="none" stroke="#9a9a9a" stroke-width="1.1"/></svg>
<div style="left:37px;top:639.4px;width:14px;height:13.4px;background:#585858;border-radius:2px;"></div>
<span class="t" style="left:41.01px;top:639.00px;font-size:11px;line-height:15px;color:#e8e8e8;letter-spacing:-0.153px;">2</span>
<span class="t" style="left:53.00px;top:638.50px;font-size:12px;line-height:16px;color:#ececec;letter-spacing:-0.590px;font-style:italic;">Gold</span>
<div style="left:172px;top:639.3px;width:92px;height:13.5px;background:#f2e205;border-radius:3px;border:1px solid rgba(0,0,0,.35);"></div>
<div style="left:271px;top:638px;width:94px;height:16px;background:#2b2b2b;border-radius:3px;"></div>
<span class="t" style="left:275.50px;top:638.50px;font-size:12px;line-height:16px;color:#5a5a5a;letter-spacing:-0.167px;">#</span>
<span class="t" style="left:288.00px;top:638.50px;font-size:12px;line-height:16px;color:#e8e8e8;letter-spacing:0.216px;">f2e205</span>
<div style="left:371px;top:638px;width:94px;height:16px;background:#2b2b2b;border-radius:3px;"></div>
<span class="t" style="left:375.00px;top:638.50px;font-size:12px;line-height:16px;color:#5e5e5e;letter-spacing:-0.200px;">A</span>
<span class="t" style="left:388.00px;top:638.50px;font-size:12px;line-height:16px;color:#e8e8e8;letter-spacing:0.156px;">255</span>
<div style="left:171px;top:657px;width:94px;height:16px;background:#2b2b2b;border-radius:3px;"></div>
<span class="t" style="left:175.50px;top:657.50px;font-size:12px;line-height:16px;color:#6a6a6a;letter-spacing:-0.217px;">R</span>
<span class="t" style="left:188.50px;top:657.50px;font-size:12px;line-height:16px;color:#e8e8e8;letter-spacing:0.123px;">242</span>
<div style="left:271px;top:657px;width:94px;height:16px;background:#2b2b2b;border-radius:3px;"></div>
<span class="t" style="left:275.50px;top:657.50px;font-size:12px;line-height:16px;color:#6a6a6a;letter-spacing:-0.234px;">G</span>
<span class="t" style="left:288.50px;top:657.50px;font-size:12px;line-height:16px;color:#e8e8e8;letter-spacing:0.123px;">226</span>
<div style="left:371px;top:657px;width:94px;height:16px;background:#2b2b2b;border-radius:3px;"></div>
<span class="t" style="left:375.50px;top:657.50px;font-size:12px;line-height:16px;color:#6a6a6a;letter-spacing:-0.200px;">B</span>
<span class="t" style="left:388.50px;top:657.50px;font-size:12px;line-height:16px;color:#e8e8e8;letter-spacing:0.112px;">5</span>
<svg style="left:21.5px;top:685.5px;" width="9" height="9" viewBox="0 0 9 9"><circle cx="4.5" cy="4.5" r="3.7" fill="none" stroke="#9a9a9a" stroke-width="1.1"/></svg>
<div style="left:37px;top:683.4px;width:14px;height:13.4px;background:#585858;border-radius:2px;"></div>
<span class="t" style="left:41.01px;top:683.00px;font-size:11px;line-height:15px;color:#e8e8e8;letter-spacing:-0.153px;">3</span>
<span class="t" style="left:53.00px;top:682.50px;font-size:12px;line-height:16px;color:#ececec;letter-spacing:-0.604px;font-style:italic;">Tangerine</span>
<div style="left:172px;top:683.3px;width:92px;height:13.5px;background:#f27405;border-radius:3px;border:1px solid rgba(0,0,0,.35);"></div>
<div style="left:271px;top:682px;width:94px;height:16px;background:#2b2b2b;border-radius:3px;"></div>
<span class="t" style="left:275.50px;top:682.50px;font-size:12px;line-height:16px;color:#5a5a5a;letter-spacing:-0.167px;">#</span>
<span class="t" style="left:288.00px;top:682.50px;font-size:12px;line-height:16px;color:#e8e8e8;letter-spacing:0.216px;">f27405</span>
<div style="left:371px;top:682px;width:94px;height:16px;background:#2b2b2b;border-radius:3px;"></div>
<span class="t" style="left:375.00px;top:682.50px;font-size:12px;line-height:16px;color:#5e5e5e;letter-spacing:-0.200px;">A</span>
<span class="t" style="left:388.00px;top:682.50px;font-size:12px;line-height:16px;color:#e8e8e8;letter-spacing:0.156px;">255</span>
<div style="left:171px;top:701px;width:94px;height:16px;background:#2b2b2b;border-radius:3px;"></div>
<span class="t" style="left:175.50px;top:701.50px;font-size:12px;line-height:16px;color:#6a6a6a;letter-spacing:-0.217px;">R</span>
<span class="t" style="left:188.50px;top:701.50px;font-size:12px;line-height:16px;color:#e8e8e8;letter-spacing:0.123px;">242</span>
<div style="left:271px;top:701px;width:94px;height:16px;background:#2b2b2b;border-radius:3px;"></div>
<span class="t" style="left:275.50px;top:701.50px;font-size:12px;line-height:16px;color:#6a6a6a;letter-spacing:-0.234px;">G</span>
<span class="t" style="left:288.50px;top:701.50px;font-size:12px;line-height:16px;color:#e8e8e8;letter-spacing:0.420px;">116</span>
<div style="left:371px;top:701px;width:94px;height:16px;background:#2b2b2b;border-radius:3px;"></div>
<span class="t" style="left:375.50px;top:701.50px;font-size:12px;line-height:16px;color:#6a6a6a;letter-spacing:-0.200px;">B</span>
<span class="t" style="left:388.50px;top:701.50px;font-size:12px;line-height:16px;color:#e8e8e8;letter-spacing:0.112px;">5</span>
<svg style="left:21.5px;top:729.5px;" width="9" height="9" viewBox="0 0 9 9"><circle cx="4.5" cy="4.5" r="3.7" fill="none" stroke="#9a9a9a" stroke-width="1.1"/></svg>
<div style="left:37px;top:727.4px;width:14px;height:13.4px;background:#585858;border-radius:2px;"></div>
<span class="t" style="left:41.01px;top:727.00px;font-size:11px;line-height:15px;color:#e8e8e8;letter-spacing:-0.153px;">4</span>
<span class="t" style="left:53.00px;top:726.50px;font-size:12px;line-height:16px;color:#ececec;letter-spacing:-0.480px;font-style:italic;">Scarlet</span>
<div style="left:172px;top:727.3px;width:92px;height:13.5px;background:#f20505;border-radius:3px;border:1px solid rgba(0,0,0,.35);"></div>
<div style="left:271px;top:726px;width:94px;height:16px;background:#2b2b2b;border-radius:3px;"></div>
<span class="t" style="left:275.50px;top:726.50px;font-size:12px;line-height:16px;color:#5a5a5a;letter-spacing:-0.167px;">#</span>
<span class="t" style="left:288.00px;top:726.50px;font-size:12px;line-height:16px;color:#e8e8e8;letter-spacing:0.216px;">f20505</span>
<div style="left:371px;top:726px;width:94px;height:16px;background:#2b2b2b;border-radius:3px;"></div>
<span class="t" style="left:375.00px;top:726.50px;font-size:12px;line-height:16px;color:#5e5e5e;letter-spacing:-0.200px;">A</span>
<span class="t" style="left:388.00px;top:726.50px;font-size:12px;line-height:16px;color:#e8e8e8;letter-spacing:0.156px;">255</span>
<div style="left:171px;top:745px;width:94px;height:16px;background:#2b2b2b;border-radius:3px;"></div>
<span class="t" style="left:175.50px;top:745.50px;font-size:12px;line-height:16px;color:#6a6a6a;letter-spacing:-0.217px;">R</span>
<span class="t" style="left:188.50px;top:745.50px;font-size:12px;line-height:16px;color:#e8e8e8;letter-spacing:0.123px;">242</span>
<div style="left:271px;top:745px;width:94px;height:16px;background:#2b2b2b;border-radius:3px;"></div>
<span class="t" style="left:275.50px;top:745.50px;font-size:12px;line-height:16px;color:#6a6a6a;letter-spacing:-0.234px;">G</span>
<span class="t" style="left:288.50px;top:745.50px;font-size:12px;line-height:16px;color:#e8e8e8;letter-spacing:0.112px;">5</span>
<div style="left:371px;top:745px;width:94px;height:16px;background:#2b2b2b;border-radius:3px;"></div>
<span class="t" style="left:375.50px;top:745.50px;font-size:12px;line-height:16px;color:#6a6a6a;letter-spacing:-0.200px;">B</span>
<span class="t" style="left:388.50px;top:745.50px;font-size:12px;line-height:16px;color:#e8e8e8;letter-spacing:0.112px;">5</span>
<div style="left:494px;top:85px;width:30px;height:545.7px;background:#464646;"></div>
<div style="left:503.6px;top:89.3px;width:2px;height:2px;background:#9c9c9c;"></div>
<div style="left:508.0px;top:89.3px;width:2px;height:2px;background:#9c9c9c;"></div>
<div style="left:512.4px;top:89.3px;width:2px;height:2px;background:#9c9c9c;"></div>
<div style="left:494.8px;top:96.3px;width:28.2px;height:27.2px;background:#141414;border-radius:4px;"></div>
<svg width="0" height="0" style="left:0;top:0"><defs><linearGradient id="tg" x1="0" y1="0" x2="0" y2="1"><stop offset="0" stop-color="#f4f4f4"/><stop offset="1" stop-color="#bcbcbc"/></linearGradient></defs></svg>
<svg style="left:499px;top:99.5px;" width="20" height="20" viewBox="0 0 20 20"><path d="M5 1.5 V17 L9 13.2 L11.5 19 L14 18 L11.6 12.3 L17 12Z" fill="none" stroke="#3ecf7a" stroke-width="1.5" stroke-linejoin="round"/></svg>
<svg style="left:499px;top:129.5px;" width="20" height="20" viewBox="0 0 20 20"><path d="M5 0 V20 L9.5 14.5 L19 12Z" fill="url(#tg)"/></svg>
<svg style="left:499px;top:160px;" width="20" height="20" viewBox="0 0 20 20"><path d="M2 3 L11 5.5 L17 12 L12.5 17.5 L5.5 12 Z" fill="url(#tg)"/><path d="M13 18.5 L18 13 L19.5 14.5 L14.5 20Z" fill="url(#tg)"/><path d="M2 3 L9.5 11" stroke="#464646" stroke-width="1.1"/><circle cx="10" cy="11.5" r="1.5" fill="#464646"/></svg>
<svg style="left:499px;top:190px;" width="20" height="20" viewBox="0 0 20 20"><path d="M3.5 17.5 L1 19.5 L2.5 16.2 L14 4.7 L16.3 7Z" fill="url(#tg)"/><path d="M15 3.7 L16.5 2.2 Q17.5 1.5 18.5 2.5 Q19.5 3.5 18.6 4.5 L17.3 6Z" fill="url(#tg)"/></svg>
<svg style="left:499px;top:220px;" width="20" height="20" viewBox="0 0 20 20"><rect x="0" y="5.5" width="13" height="11" rx="1.5" fill="url(#tg)"/><path d="M14 11 L20 6 V16Z" fill="url(#tg)"/><rect x="2" y="3" width="6" height="1.6" fill="url(#tg)"/><circle cx="3.2" cy="8.5" r="1" fill="#464646"/></svg>
<svg style="left:499px;top:250px;" width="20" height="20" viewBox="0 0 20 20"><path d="M2 18 L18 3" stroke="#d8d8d8" stroke-width="1.2"/></svg>
<svg style="left:499px;top:280px;" width="20" height="20" viewBox="0 0 20 20"><path d="M2.5 2.5 H17.5 V6 H12.2 V18 H7.8 V6 H2.5Z" fill="url(#tg)"/></svg>
<svg style="left:499px;top:310px;" width="20" height="20" viewBox="0 0 20 20"><path d="M2 2 V12 L5 9.5 L10 8Z" fill="url(#tg)"/><path d="M7 3 L15 1.5 M16 3 L18 17 M16 18.5 L3 18.5 M2 17 L3 13" stroke="url(#tg)" stroke-width="1.1" stroke-dasharray="3 1.5" fill="none"/><circle cx="16" cy="1.8" r="1.2" fill="url(#tg)"/><circle cx="18" cy="18.3" r="1.2" fill="url(#tg)"/><circle cx="1.8" cy="18.3" r="1.2" fill="url(#tg)"/></svg>
<svg style="left:499px;top:340px;" width="20" height="20" viewBox="0 0 20 20"><rect x="2.5" y="2.5" width="15" height="15" fill="url(#tg)"/></svg>
<svg style="left:499px;top:370px;" width="20" height="20" viewBox="0 0 20 20"><circle cx="10" cy="10" r="8" fill="url(#tg)"/></svg>
<svg style="left:499px;top:400px;" width="20" height="20" viewBox="0 0 20 20"><path d="M10 2 L18.5 8.2 L15.2 18 H4.8 L1.5 8.2Z" fill="url(#tg)"/></svg>
<svg style="left:499px;top:430px;" width="20" height="20" viewBox="0 0 20 20"><path d="M10 1 L12.5 7.6 L19.5 7.9 L14 12.2 L15.9 19 L10 15.1 L4.1 19 L6 12.2 L.5 7.9 L7.5 7.6Z" fill="url(#tg)"/></svg>
<svg style="left:499px;top:460px;" width="20" height="20" viewBox="0 0 20 20"><path d="M16.3 10 A6.3 6.3 0 1 0 8.9 16.2" fill="none" stroke="url(#tg)" stroke-width="3.3"/></svg>
<svg style="left:499px;top:490px;" width="20" height="20" viewBox="0 0 20 20"><path d="M10 1 Q11 9 19 10 Q11 11 10 19 Q9 11 1 10 Q9 9 10 1Z" fill="url(#tg)"/></svg>
<svg style="left:499px;top:520px;" width="20" height="20" viewBox="0 0 20 20"><rect x="8.4" y="0.8" width="3.2" height="4" fill="url(#tg)" transform="rotate(0 10 10)"/><rect x="8.4" y="0.8" width="3.2" height="4" fill="url(#tg)" transform="rotate(45 10 10)"/><rect x="8.4" y="0.8" width="3.2" height="4" fill="url(#tg)" transform="rotate(90 10 10)"/><rect x="8.4" y="0.8" width="3.2" height="4" fill="url(#tg)" transform="rotate(135 10 10)"/><rect x="8.4" y="0.8" width="3.2" height="4" fill="url(#tg)" transform="rotate(180 10 10)"/><rect x="8.4" y="0.8" width="3.2" height="4" fill="url(#tg)" transform="rotate(225 10 10)"/><rect x="8.4" y="0.8" width="3.2" height="4" fill="url(#tg)" transform="rotate(270 10 10)"/><rect x="8.4" y="0.8" width="3.2" height="4" fill="url(#tg)" transform="rotate(315 10 10)"/><circle cx="10" cy="10" r="5.2" fill="none" stroke="url(#tg)" stroke-width="3.4"/></svg>
<svg style="left:499px;top:550px;" width="20" height="20" viewBox="0 0 20 20"><path d="M0 10 L6 4.5 V8.3 H14 V4.5 L20 10 L14 15.5 V11.7 H6 V15.5Z" fill="url(#tg)"/></svg>
<svg style="left:499px;top:580px;" width="20" height="20" viewBox="0 0 20 20"><rect x="1" y="7" width="18" height="6.5" rx="3.2" fill="url(#tg)"/></svg>
<div style="left:530px;top:85px;width:1057px;height:22px;background:#1e1e1e;"></div>
<div style="left:530px;top:85px;width:87px;height:23px;background:#464646;border-radius:4px 4px 0 0;"></div>
<span class="t" style="left:535.70px;top:88.50px;font-size:12px;line-height:16px;color:#e8e8e8;letter-spacing:-0.094px;">Composition 1</span>
<div style="left:530px;top:107px;width:1057px;height:523.7px;background:#464646;"></div>
<div style="left:550px;top:127px;width:1037px;height:481.8px;background:#000;"></div>
<div style="left:662px;top:140px;width:811px;height:456px;background:#fff;"></div>
<span class="t" style="left:535.50px;top:111.00px;font-size:10px;line-height:14px;color:#a8a8a8;letter-spacing:-0.132px;">px</span>
<svg style="left:0px;top:0px;" width="1920" height="1029" viewBox="0 0 1920 1029"><path d="M561.8 119.4V127M574.5 123V127M587.2 123V127M599.8 123V127M612.5 123V127M625.2 119.4V127M637.8 123V127M650.5 123V127M663.2 123V127M675.8 123V127M688.5 119.4V127M701.2 123V127M713.8 123V127M726.5 123V127M739.2 123V127M751.8 119.4V127M764.5 123V127M777.2 123V127M789.8 123V127M802.5 123V127M815.2 119.4V127M827.8 123V127M840.5 123V127M853.2 123V127M865.8 123V127M878.5 119.4V127M891.2 123V127M903.8 123V127M916.5 123V127M929.2 123V127M941.8 119.4V127M954.5 123V127M967.2 123V127M979.8 123V127M992.5 123V127M1005.2 119.4V127M1017.8 123V127M1030.5 123V127M1043.2 123V127M1055.8 123V127M1068.5 119.4V127M1081.2 123V127M1093.8 123V127M1106.5 123V127M1119.2 123V127M1131.8 119.4V127M1144.5 123V127M1157.2 123V127M1169.8 123V127M1182.5 123V127M1195.2 119.4V127M1207.8 123V127M1220.5 123V127M1233.2 123V127M1245.8 123V127M1258.5 119.4V127M1271.2 123V127M1283.8 123V127M1296.5 123V127M1309.2 123V127M1321.8 119.4V127M1334.5 123V127M1347.2 123V127M1359.8 123V127M1372.5 123V127M1385.2 119.4V127M1397.8 123V127M1410.5 123V127M1423.2 123V127M1435.8 123V127M1448.5 119.4V127M1461.2 123V127M1473.8 123V127M1486.5 123V127M1499.2 123V127M1511.8 119.4V127M1524.5 123V127M1537.2 123V127M1549.8 123V127M1562.5 123V127M1575.2 119.4V127" stroke="#9a9a9a" stroke-width="1" fill="none"/></svg>
<span class="t" style="left:612.24px;top:107.75px;font-size:10.5px;line-height:14.5px;color:#b8b8b8;letter-spacing:-0.200px;">-1050</span>
<span class="t" style="left:678.39px;top:107.75px;font-size:10.5px;line-height:14.5px;color:#b8b8b8;letter-spacing:-0.200px;">-900</span>
<span class="t" style="left:741.73px;top:107.75px;font-size:10.5px;line-height:14.5px;color:#b8b8b8;letter-spacing:-0.200px;">-750</span>
<span class="t" style="left:805.06px;top:107.75px;font-size:10.5px;line-height:14.5px;color:#b8b8b8;letter-spacing:-0.200px;">-600</span>
<span class="t" style="left:868.39px;top:107.75px;font-size:10.5px;line-height:14.5px;color:#b8b8b8;letter-spacing:-0.200px;">-450</span>
<span class="t" style="left:931.73px;top:107.75px;font-size:10.5px;line-height:14.5px;color:#b8b8b8;letter-spacing:-0.200px;">-300</span>
<span class="t" style="left:995.06px;top:107.75px;font-size:10.5px;line-height:14.5px;color:#b8b8b8;letter-spacing:-0.200px;">-150</span>
<span class="t" style="left:1065.68px;top:107.75px;font-size:10.5px;line-height:14.5px;color:#b8b8b8;letter-spacing:-0.200px;">0</span>
<span class="t" style="left:1123.37px;top:107.75px;font-size:10.5px;line-height:14.5px;color:#b8b8b8;letter-spacing:-0.200px;">150</span>
<span class="t" style="left:1186.70px;top:107.75px;font-size:10.5px;line-height:14.5px;color:#b8b8b8;letter-spacing:-0.200px;">300</span>
<span class="t" style="left:1250.03px;top:107.75px;font-size:10.5px;line-height:14.5px;color:#b8b8b8;letter-spacing:-0.200px;">450</span>
<span class="t" style="left:1313.37px;top:107.75px;font-size:10.5px;line-height:14.5px;color:#b8b8b8;letter-spacing:-0.200px;">600</span>
<span class="t" style="left:1376.70px;top:107.75px;font-size:10.5px;line-height:14.5px;color:#b8b8b8;letter-spacing:-0.200px;">750</span>
<span class="t" style="left:1440.03px;top:107.75px;font-size:10.5px;line-height:14.5px;color:#b8b8b8;letter-spacing:-0.200px;">900</span>
<span class="t" style="left:1500.55px;top:107.75px;font-size:10.5px;line-height:14.5px;color:#b8b8b8;letter-spacing:-0.200px;">1050</span>
<div style="left:1560px;top:107px;width:27px;height:14px;overflow:hidden;"><span class="t" style="left:5px;top:1.4px;font-size:10px;line-height:14px;color:#b8b8b8;letter-spacing:-.1px">1200</span></div>
<svg style="left:0px;top:0px;" width="1920" height="1029" viewBox="0 0 1920 1029"><path d="M546 596.0H550M546 583.3H550M546 570.7H550M542.5 558.0H550M546 545.3H550M546 532.7H550M546 520.0H550M546 507.3H550M542.5 494.7H550M546 482.0H550M546 469.3H550M546 456.7H550M546 444.0H550M542.5 431.3H550M546 418.7H550M546 406.0H550M546 393.3H550M546 380.7H550M542.5 368.0H550M546 355.3H550M546 342.7H550M546 330.0H550M546 317.3H550M542.5 304.7H550M546 292.0H550M546 279.3H550M546 266.7H550M546 254.0H550M542.5 241.3H550M546 228.7H550M546 216.0H550M546 203.3H550M546 190.7H550M542.5 178.0H550M546 165.3H550M546 152.7H550M546 140.0H550" stroke="#9a9a9a" stroke-width="1.6" fill="none"/></svg>
<span class="t" style="left:537.8px;top:558.0px;font-size:10px;line-height:14px;color:#b8b8b8;letter-spacing:-.1px;transform:translate(-50%,-50%) rotate(-90deg);">-450</span>
<span class="t" style="left:537.8px;top:494.7px;font-size:10px;line-height:14px;color:#b8b8b8;letter-spacing:-.1px;transform:translate(-50%,-50%) rotate(-90deg);">-300</span>
<span class="t" style="left:537.8px;top:431.3px;font-size:10px;line-height:14px;color:#b8b8b8;letter-spacing:-.1px;transform:translate(-50%,-50%) rotate(-90deg);">-150</span>
<span class="t" style="left:537.8px;top:368.0px;font-size:10px;line-height:14px;color:#b8b8b8;letter-spacing:-.1px;transform:translate(-50%,-50%) rotate(-90deg);">0</span>
<span class="t" style="left:537.8px;top:304.7px;font-size:10px;line-height:14px;color:#b8b8b8;letter-spacing:-.1px;transform:translate(-50%,-50%) rotate(-90deg);">150</span>
<span class="t" style="left:537.8px;top:241.3px;font-size:10px;line-height:14px;color:#b8b8b8;letter-spacing:-.1px;transform:translate(-50%,-50%) rotate(-90deg);">300</span>
<span class="t" style="left:537.8px;top:178.0px;font-size:10px;line-height:14px;color:#b8b8b8;letter-spacing:-.1px;transform:translate(-50%,-50%) rotate(-90deg);">450</span>
<svg style="left:0px;top:0px;font-family:'Liberation Sans',sans-serif;" width="1920" height="1029" viewBox="0 0 1920 1029"><text transform="translate(875.06,399.50) scale(0.988,1)" font-size="54.5" font-weight="700" fill="#2e2e29" stroke="#2e2e29" stroke-width="1.5" stroke-linejoin="round">J</text><text transform="translate(904.24,399.50) scale(1.091,1)" font-size="54.5" font-weight="700" fill="#2e2e29" stroke="#2e2e29" stroke-width="1.5" stroke-linejoin="round">u</text><text transform="translate(941.62,399.50) scale(1.176,1)" font-size="54.5" font-weight="700" fill="#2e2e29" stroke="#2e2e29" stroke-width="1.5" stroke-linejoin="round">m</text><text transform="translate(998.88,399.50) scale(1.131,1)" font-size="54.5" font-weight="700" fill="#2e2e29" stroke="#2e2e29" stroke-width="1.5" stroke-linejoin="round">p</text><text transform="translate(1034.59,386.80) scale(1.181,1)" font-size="60.2" font-weight="700" fill="#2e2e29" stroke="#2e2e29" stroke-width="1.5" stroke-linejoin="round">i</text><text transform="translate(1050.15,380.90) scale(1.070,1)" font-size="64.9" font-weight="700" fill="#2e2e29" stroke="#2e2e29" stroke-width="1.5" stroke-linejoin="round">n</text><text transform="translate(1088.01,369.70) scale(1.052,1)" font-size="64.9" font-weight="700" fill="#2e2e29" stroke="#2e2e29" stroke-width="1.5" stroke-linejoin="round">g</text><text transform="translate(1137.94,369.50) scale(1.010,1)" font-size="68.2" font-weight="700" fill="#2e2e29" stroke="#2e2e29" stroke-width="1.5" stroke-linejoin="round">T</text><text transform="translate(1166.84,367.10) scale(1.153,1)" font-size="70.1" font-weight="700" fill="#2e2e29" stroke="#2e2e29" stroke-width="1.5" stroke-linejoin="round">e</text><text transform="translate(1200.21,366.10) scale(1.082,1)" font-size="70.1" font-weight="700" fill="#2e2e29" stroke="#2e2e29" stroke-width="1.5" stroke-linejoin="round">x</text><text transform="translate(1239.44,367.20) scale(1.014,1)" font-size="70.1" font-weight="700" fill="#2e2e29" stroke="#2e2e29" stroke-width="1.5" stroke-linejoin="round">t</text></svg>
<svg style="left:0px;top:0px;" width="1920" height="1029" viewBox="0 0 1920 1029"><circle cx="1220.5" cy="347" r="211" fill="none" stroke="#4279ee" stroke-width="2.2" stroke-linecap="round" stroke-dasharray="0.1 3.92"/><path d="M1194 347.5H1247M1220.5 321V374" stroke="#4279ee" stroke-width="2" stroke-linecap="round" stroke-dasharray="0.1 3.9" fill="none"/></svg>
<span class="t" style="left:569.90px;top:511.00px;font-size:12px;line-height:16px;color:#fff;letter-spacing:-0.422px;mix-blend-mode:difference;">Hold S</span>
<span class="t" style="left:605.60px;top:511.00px;font-size:12px;line-height:16px;color:rgba(151,151,151,.55);letter-spacing:-0.081px;">Direct Layer Selection</span>
<span class="t" style="left:569.90px;top:525.00px;font-size:12px;line-height:16px;color:#fff;letter-spacing:-0.786px;mix-blend-mode:difference;">Space</span>
<span class="t" style="left:603.10px;top:525.00px;font-size:12px;line-height:16px;color:rgba(151,151,151,.55);letter-spacing:-0.180px;">Play/ Stop</span>
<span class="t" style="left:569.90px;top:539.00px;font-size:12px;line-height:16px;color:#fff;letter-spacing:-0.397px;mix-blend-mode:difference;">Space + click + drag</span>
<span class="t" style="left:674.20px;top:539.00px;font-size:12px;line-height:16px;color:rgba(151,151,151,.55);letter-spacing:-0.753px;">Pan</span>
<span class="t" style="left:569.90px;top:553.00px;font-size:12px;line-height:16px;color:#fff;letter-spacing:-0.168px;mix-blend-mode:difference;">Alt + click + drag</span>
<span class="t" style="left:658.70px;top:553.00px;font-size:12px;line-height:16px;color:rgba(151,151,151,.55);letter-spacing:0.010px;">Move Pivot Point</span>
<span class="t" style="left:569.90px;top:567.00px;font-size:12px;line-height:16px;color:#fff;letter-spacing:-0.043px;mix-blend-mode:difference;">Shift</span>
<span class="t" style="left:596.80px;top:567.00px;font-size:12px;line-height:16px;color:rgba(151,151,151,.55);letter-spacing:-0.381px;">Enable Snapping</span>
<span class="t" style="left:998.20px;top:587.70px;font-size:12px;line-height:16px;color:#fff;letter-spacing:0.068px;mix-blend-mode:difference;">Viewport Quality: High</span>
<div style="left:535px;top:612px;width:78px;height:15.8px;background:#2b2b2b;border-radius:3px;"></div>
<span class="t" style="left:539.00px;top:613.00px;font-size:12px;line-height:16px;color:#e4e4e4;letter-spacing:-0.510px;">42%</span>
<svg style="left:599.5px;top:617.5px;" width="9" height="6" viewBox="0 0 9 6"><path d="M.8 .8 L4.5 4.5 L8.2 .8" fill="none" stroke="#d0d0d0" stroke-width="1.1"/></svg>
<div style="left:866.2px;top:610.5px;width:99.4px;height:19px;background:#2b2b2b;border-radius:4px;border:1px solid #1b1b1b;"></div>
<div style="left:885.5px;top:611.5px;width:1px;height:17px;background:#1b1b1b;"></div>
<div style="left:905.5px;top:611.5px;width:1px;height:17px;background:#1b1b1b;"></div>
<div style="left:925.5px;top:611.5px;width:1px;height:17px;background:#1b1b1b;"></div>
<div style="left:945.5px;top:611.5px;width:1px;height:17px;background:#1b1b1b;"></div>
<div style="left:971.2px;top:610.5px;width:19.4px;height:19px;background:#2b2b2b;border-radius:4px;border:1px solid #1b1b1b;"></div>
<svg style="left:0px;top:0px;" width="1920" height="1029" viewBox="0 0 1920 1029"><rect x="869.8" y="614.8" width="2.2" height="10.4" fill="#c8c8c8"/><path d="M881.2 614.8V625.2L873 620Z" fill="#c8c8c8"/><path d="M898.6 614.8V625.2L890.3 620Z" fill="#c8c8c8"/><rect x="899.8" y="614.8" width="2.2" height="10.4" fill="#c8c8c8"/><path d="M910.7 614.6V625.4L919.8 620Z" fill="#c8c8c8"/><rect x="929.8" y="614.8" width="2.2" height="10.4" fill="#c8c8c8"/><path d="M933.7 614.8V625.2L941.8 620Z" fill="#c8c8c8"/><path d="M950.7 614.8V625.2L959.2 620Z" fill="#c8c8c8"/><rect x="960" y="614.8" width="2.2" height="10.4" fill="#c8c8c8"/><path d="M981 618.2H975.5Q974.3 618.2 974.3 619.4V622.4Q974.3 623.6 975.5 623.6H986.5Q987.7 623.6 987.7 622.4V619.4Q987.7 618.2 986.9 618.2" fill="none" stroke="#c8c8c8" stroke-width="1.3"/><path d="M981.5 614V619.6L986.6 616.8Z" fill="#c8c8c8"/></svg>
<div style="left:1232px;top:611px;width:37px;height:18.5px;background:#2b2b2b;border-radius:3px;border:1px solid #1b1b1b;"></div>
<svg style="left:1236px;top:615px;" width="13" height="10" viewBox="0 0 13 10"><path d="M0 5 L3.5 1 H13 V9 H3.5Z" fill="#dcdcdc"/><circle cx="4.2" cy="5" r="1" fill="#2b2b2b"/></svg>
<span class="t" style="left:1258.24px;top:612.50px;font-size:12px;line-height:16px;color:#7d8fb0;letter-spacing:-0.167px;">0</span>
<div style="left:1272px;top:611px;width:31px;height:18.5px;background:#2b2b2b;border-radius:3px;border:1px solid #1b1b1b;"></div>
<div style="left:1290px;top:612px;width:1px;height:16.5px;background:#1b1b1b;"></div>
<svg style="left:1275.5px;top:613px;" width="14" height="14" viewBox="0 0 14 14"><path d="M0 4.5H3L7 1V13L3 9.5H0Z" fill="#3ecf7a"/><path d="M9 4Q10.8 7 9 10M11 2Q14 7 11 12" stroke="#3ecf7a" stroke-width="1.3" fill="none"/></svg>
<svg style="left:1294px;top:615px;" width="7" height="10" viewBox="0 0 7 10"><path d="M1 1.5 L6 5 L1 8.5Z" fill="none" stroke="#8a8a8a" stroke-width="1"/></svg>
<div style="left:1307px;top:611px;width:31px;height:18.5px;background:#2b2b2b;border-radius:3px;border:1px solid #1b1b1b;"></div>
<div style="left:1325px;top:612px;width:1px;height:16.5px;background:#1b1b1b;"></div>
<div style="left:1308px;top:612px;width:17px;height:16.5px;background:#4a4a4a;border-radius:2px 0 0 2px;"></div>
<svg style="left:1310px;top:613px;" width="14" height="14" viewBox="0 0 14 14"><path d="M3 9 A4.5 4.5 0 1 1 10.5 5.5 L12.5 9.5" fill="none" stroke="#dcdcdc" stroke-width="2.6"/></svg>
<svg style="left:1329px;top:615px;" width="7" height="10" viewBox="0 0 7 10"><path d="M1 1.5 L6 5 L1 8.5Z" fill="none" stroke="#8a8a8a" stroke-width="1"/></svg>
<div style="left:1342px;top:611px;width:31px;height:18.5px;background:#2b2b2b;border-radius:3px;border:1px solid #1b1b1b;"></div>
<div style="left:1360px;top:612px;width:1px;height:16.5px;background:#1b1b1b;"></div>
<div style="left:1343px;top:612px;width:17px;height:16.5px;background:#4a4a4a;border-radius:2px 0 0 2px;"></div>
<svg style="left:1344.5px;top:613px;" width="14" height="14" viewBox="0 0 14 14"><path d="M4.5 0V14M9.5 0V14M0 4.5H14M0 9.5H14" stroke="#dcdcdc" stroke-width="1.1"/></svg>
<svg style="left:1364px;top:615px;" width="7" height="10" viewBox="0 0 7 10"><path d="M1 1.5 L6 5 L1 8.5Z" fill="none" stroke="#8a8a8a" stroke-width="1"/></svg>
<div style="left:1377px;top:611px;width:20px;height:18.5px;background:#2b2b2b;border-radius:3px;border:1px solid #1b1b1b;"></div>
<svg style="left:1380px;top:613.5px;" width="14" height="13" viewBox="0 0 14 13"><rect x="0" y="0" width="3.5" height="5" fill="#3ecf7a"/><rect x="0" y="6.5" width="3.5" height="6" fill="#3ecf7a"/><rect x="5.5" y=".7" width="8" height="4" fill="none" stroke="#3ecf7a" stroke-width="1.3"/><rect x="5" y="6.5" width="9" height="6" fill="#3ecf7a"/></svg>
<div style="left:1400px;top:611px;width:20px;height:18.5px;background:#2b2b2b;border-radius:3px;border:1px solid #1b1b1b;"></div>
<svg style="left:1403px;top:614.5px;" width="14" height="11" viewBox="0 0 14 11"><path d="M0 0L4 5.5L0 11H2L6 5.5L2 0ZM4.5 0L8.5 5.5L4.5 11H6.5L10.5 5.5L6.5 0ZM9 0L13 5.5L9 11H11L14.5 5.5L11 0Z" fill="#dcdcdc"/></svg>
<div style="left:1423px;top:611px;width:31px;height:18.5px;background:#2b2b2b;border-radius:3px;border:1px solid #1b1b1b;"></div>
<div style="left:1441px;top:612px;width:1px;height:16.5px;background:#1b1b1b;"></div>
<div style="left:1424px;top:612px;width:17px;height:16.5px;background:#4a4a4a;border-radius:2px 0 0 2px;"></div>
<svg style="left:1425.5px;top:613.5px;" width="14" height="13" viewBox="0 0 14 13"><rect x=".7" y=".7" width="12.6" height="9" fill="none" stroke="#dcdcdc" stroke-width="1.4"/><rect x="0" y="10.5" width="14" height="2.2" fill="#dcdcdc"/></svg>
<svg style="left:1445px;top:615px;" width="7" height="10" viewBox="0 0 7 10"><path d="M1 1.5 L6 5 L1 8.5Z" fill="none" stroke="#8a8a8a" stroke-width="1"/></svg>
<div style="left:1458px;top:611px;width:31px;height:18.5px;background:#2b2b2b;border-radius:3px;border:1px solid #1b1b1b;"></div>
<div style="left:1476px;top:612px;width:1px;height:16.5px;background:#1b1b1b;"></div>
<div style="left:1459px;top:612px;width:17px;height:16.5px;background:#4a4a4a;border-radius:2px 0 0 2px;"></div>
<svg style="left:1461px;top:613.5px;" width="14" height="13" viewBox="0 0 14 13"><rect x=".5" y=".5" width="7" height="5" fill="none" stroke="#dcdcdc" stroke-width="1"/><path d="M3 7.5V8.5H10.5V3M6 10.5V11.5H13.5V6" fill="none" stroke="#9a9a9a" stroke-width="1"/></svg>
<svg style="left:1480px;top:615px;" width="7" height="10" viewBox="0 0 7 10"><path d="M1 1.5 L6 5 L1 8.5Z" fill="none" stroke="#8a8a8a" stroke-width="1"/></svg>
<div style="left:1493px;top:611px;width:31px;height:18.5px;background:#2b2b2b;border-radius:3px;border:1px solid #1b1b1b;"></div>
<div style="left:1511px;top:612px;width:1px;height:16.5px;background:#1b1b1b;"></div>
<div style="left:1494px;top:612px;width:17px;height:16.5px;background:#4a4a4a;border-radius:2px 0 0 2px;"></div>
<svg style="left:1496px;top:613px;" width="14" height="14" viewBox="0 0 14 14"><rect x="0" y="0" width="8" height="8" fill="#dcdcdc"/><rect x="5.7" y="5.7" width="7.6" height="7.6" fill="#4a4a4a" stroke="#dcdcdc" stroke-width="1.2"/></svg>
<svg style="left:1515px;top:615px;" width="7" height="10" viewBox="0 0 7 10"><path d="M1 1.5 L6 5 L1 8.5Z" fill="none" stroke="#8a8a8a" stroke-width="1"/></svg>
<div style="left:1528px;top:611px;width:31px;height:18.5px;background:#2b2b2b;border-radius:3px;border:1px solid #1b1b1b;"></div>
<div style="left:1546px;top:612px;width:1px;height:16.5px;background:#1b1b1b;"></div>
<svg style="left:1531px;top:614px;" width="12" height="12" viewBox="0 0 12 12"><rect x="0" y="0" width="3" height="3" fill="#3ecf7a"/><rect x="6" y="0" width="3" height="3" fill="#3ecf7a"/><rect x="3" y="3" width="3" height="3" fill="#3ecf7a"/><rect x="9" y="3" width="3" height="3" fill="#3ecf7a"/><rect x="0" y="6" width="3" height="3" fill="#3ecf7a"/><rect x="6" y="6" width="3" height="3" fill="#3ecf7a"/><rect x="3" y="9" width="3" height="3" fill="#3ecf7a"/><rect x="9" y="9" width="3" height="3" fill="#3ecf7a"/></svg>
<svg style="left:1550px;top:615px;" width="7" height="10" viewBox="0 0 7 10"><path d="M1 1.5 L6 5 L1 8.5Z" fill="none" stroke="#8a8a8a" stroke-width="1"/></svg>
<div style="left:1563px;top:611px;width:20px;height:18.5px;background:#2b2b2b;border-radius:3px;border:1px solid #1b1b1b;"></div>
<svg style="left:1566px;top:613px;" width="14" height="14" viewBox="0 0 14 14"><rect x="5.8" y="0.2" width="2.4" height="3" fill="#dcdcdc" transform="rotate(0 7 7)"/><rect x="5.8" y="0.2" width="2.4" height="3" fill="#dcdcdc" transform="rotate(45 7 7)"/><rect x="5.8" y="0.2" width="2.4" height="3" fill="#dcdcdc" transform="rotate(90 7 7)"/><rect x="5.8" y="0.2" width="2.4" height="3" fill="#dcdcdc" transform="rotate(135 7 7)"/><rect x="5.8" y="0.2" width="2.4" height="3" fill="#dcdcdc" transform="rotate(180 7 7)"/><rect x="5.8" y="0.2" width="2.4" height="3" fill="#dcdcdc" transform="rotate(225 7 7)"/><rect x="5.8" y="0.2" width="2.4" height="3" fill="#dcdcdc" transform="rotate(270 7 7)"/><rect x="5.8" y="0.2" width="2.4" height="3" fill="#dcdcdc" transform="rotate(315 7 7)"/><circle cx="7" cy="7" r="3.7" fill="none" stroke="#dcdcdc" stroke-width="2.4"/></svg>
<div style="left:1593px;top:85px;width:321px;height:22px;background:#1e1e1e;"></div>
<div style="left:1593px;top:85px;width:40px;height:23px;background:#464646;border-radius:4px 4px 0 0;"></div>
<span class="t" style="left:1598.50px;top:88.50px;font-size:12px;line-height:16px;color:#e8e8e8;letter-spacing:0.163px;">Color</span>
<div style="left:1634px;top:85px;width:69px;height:22px;background:#2a2a2a;border-radius:4px 4px 0 0;"></div>
<span class="t" style="left:1639.50px;top:88.50px;font-size:12px;line-height:16px;color:#e8e8e8;letter-spacing:-0.270px;">Add Layers</span>
<div style="left:1593px;top:107px;width:307px;height:427.7px;background:#464646;"></div>
<div style="left:1900px;top:107px;width:14px;height:427.7px;background:#3b3b3b;"></div>
<div style="left:1902px;top:108px;width:10px;height:388px;background:#585858;border-radius:5px;"></div>
<div style="left:1645.5px;top:119.5px;width:200px;height:200px;border-radius:50%;background:conic-gradient(from 90deg,#f00 0,#f200f2 16.67%,#00f 33.33%,#00eaea 50%,#0f0 66.67%,#e2f400 82.5%,#ffd000 88%,#f00 100%);"></div>
<div style="left:1671.5px;top:145.5px;width:148px;height:148px;background:#464646;border-radius:74px;"></div>
<div style="left:1702px;top:176px;width:90px;height:90px;background:linear-gradient(to right,#000,rgba(0,0,0,0)),linear-gradient(to bottom,#fff,#f00);"></div>
<svg style="left:1738px;top:168.8px;" width="14" height="14" viewBox="0 0 14 14"><circle cx="7" cy="7" r="5.8" fill="none" stroke="#e8e8e8" stroke-width="1.1"/></svg>
<svg style="left:1826px;top:213px;" width="14" height="14" viewBox="0 0 14 14"><circle cx="7" cy="7" r="5.8" fill="none" stroke="#f4f4f4" stroke-width="1.1"/></svg>
<div style="left:1600px;top:333px;width:22px;height:21.7px;background:#7a7a7a;border-radius:3px;"></div>
<span class="t" style="left:1625.50px;top:336.50px;font-size:12px;line-height:16px;color:#e4e4e4;letter-spacing:-0.254px;">Gray</span>
<div style="left:1871px;top:333px;width:22px;height:21.7px;background:#2b2b2b;border-radius:4px;border:1px solid #1b1b1b;"></div>
<svg style="left:1876px;top:337px;" width="13" height="13" viewBox="0 0 13 13"><path d="M9.2 1.2 a1.9 1.9 0 0 1 2.7 2.7 L9.8 6 L7.1 3.3Z M7.6 4.6 L2.2 10 L1.2 12 L3.2 11 L8.6 5.6" fill="#c8c8c8" stroke="#c8c8c8" stroke-width=".8"/></svg>
<div style="left:1600.5px;top:360.5px;width:49px;height:17px;background:#3c3c3c;border-radius:3px;border:1px solid #5a5a5a;"></div>
<span class="t" style="left:1603.50px;top:361.50px;font-size:12px;line-height:16px;color:#e4e4e4;letter-spacing:-0.281px;">Hex</span>
<svg style="left:1636.5px;top:367px;" width="9" height="6" viewBox="0 0 9 6"><path d="M.8 .8 L4.5 4.5 L8.2 .8" fill="none" stroke="#d0d0d0" stroke-width="1.1"/></svg>
<div style="left:1653px;top:358.5px;width:240px;height:21.2px;background:#2b2b2b;border-radius:3px;"></div>
<span class="t" style="left:1657.50px;top:361.50px;font-size:12px;line-height:16px;color:#5a5a5a;letter-spacing:-0.167px;">#</span>
<span class="t" style="left:1670.00px;top:361.50px;font-size:12px;line-height:16px;color:#e8e8e8;letter-spacing:-0.174px;">7a7a7a</span>
<div style="left:1600px;top:390.5px;width:234px;height:3.5px;background:#e2e2e2;border-radius:2px;"></div>
<div style="left:1829px;top:387px;width:10px;height:10px;background:#7ecfb3;border-radius:5px;"></div>
<div style="left:1832px;top:390px;width:4px;height:4px;background:#5aa890;border-radius:2px;"></div>
<div style="left:1849px;top:384px;width:44px;height:16px;background:#2b2b2b;border-radius:3px;"></div>
<span class="t" style="left:1853.00px;top:384.50px;font-size:12px;line-height:16px;color:#555;letter-spacing:-0.200px;">A</span>
<span class="t" style="left:1866.00px;top:384.50px;font-size:12px;line-height:16px;color:#e8e8e8;letter-spacing:0.156px;">255</span>
<div style="left:1597.5px;top:406px;width:298px;height:23px;background:#2a2a2a;border-radius:4px;"></div>
<div style="left:1599px;top:407px;width:148px;height:22px;background:#464646;border-radius:4px 4px 0 0;"></div>
<span class="t" style="left:1647.50px;top:409.50px;font-size:12px;line-height:16px;color:#e8e8e8;letter-spacing:-0.254px;">Swatches</span>
<span class="t" style="left:1792.75px;top:409.50px;font-size:12px;line-height:16px;color:#bcbcbc;letter-spacing:0.052px;">Generator</span>
<div style="left:1598.5px;top:431.5px;width:256px;height:17px;background:#5a5a5a;border-radius:3px;"></div>
<div style="left:1599px;top:432px;width:62.5px;height:16px;background:#2b2b2b;border-radius:3px;border:1px solid #6c6c6c;"></div>
<svg style="left:1604.5px;top:435.5px;" width="11" height="9" viewBox="0 0 11 9"><path d="M1 0V9M4 0V9" stroke="#3ecf7a" stroke-width="1.5"/><path d="M6.5 .5L10 9" stroke="#3ecf7a" stroke-width="1.5"/></svg>
<span class="t" style="left:1621.00px;top:432.30px;font-size:12px;line-height:16px;color:#e8e8e8;letter-spacing:0.116px;">Library</span>
<svg style="left:1670.5px;top:435.3px;" width="11" height="9" viewBox="0 0 11 9"><path d="M.6 2.5H10.4V8.5H.6Z M.6 2.5V.6H4L5 2.5" fill="none" stroke="#d8d8d8" stroke-width="1.1"/><path d="M2.5 5H8.5M2.5 7H8.5" stroke="#d8d8d8" stroke-width=".9"/></svg>
<span class="t" style="left:1686.00px;top:432.30px;font-size:12px;line-height:16px;color:#e0e0e0;letter-spacing:0.092px;">Project</span>
<svg style="left:1738px;top:434.8px;" width="8" height="10" viewBox="0 0 8 10"><path d="M.6 .6H5L7.4 3V9.4H.6Z M5 .6V3H7.4" fill="none" stroke="#d8d8d8" stroke-width="1.1"/></svg>
<span class="t" style="left:1752.00px;top:432.30px;font-size:12px;line-height:16px;color:#e0e0e0;letter-spacing:-0.606px;">Scene</span>
<svg style="left:1800.5px;top:435.3px;" width="11" height="9" viewBox="0 0 11 9"><path d="M2.5 .6H8.5Q10.4 .6 10.4 2.5V4.5L6.5 8.4H2.5Q.6 8.4 .6 6.5V2.5Q.6 .6 2.5 .6ZM10.4 4.5H8Q6.5 4.5 6.5 6V8.4" fill="none" stroke="#d8d8d8" stroke-width="1.1"/></svg>
<span class="t" style="left:1816.00px;top:432.30px;font-size:12px;line-height:16px;color:#e0e0e0;letter-spacing:-0.312px;">Labels</span>
<div style="left:1857.5px;top:431.5px;width:37px;height:17px;background:#5a5a5a;border-radius:3px;"></div>
<div style="left:1858px;top:432px;width:18px;height:16px;background:#2b2b2b;border-radius:3px;border:1px solid #6c6c6c;"></div>
<svg style="left:1862.5px;top:435.5px;" width="9" height="9" viewBox="0 0 9 9"><rect x="0" y="0" width="3.5" height="3.5" rx=".7" fill="#3ecf7a"/><rect x="0" y="5.5" width="3.5" height="3.5" rx=".7" fill="#3ecf7a"/><rect x="5.5" y="0" width="3.5" height="3.5" rx=".7" fill="#3ecf7a"/><rect x="5.5" y="5.5" width="3.5" height="3.5" rx=".7" fill="#3ecf7a"/></svg>
<svg style="left:1881px;top:436px;" width="10" height="8" viewBox="0 0 10 8"><path d="M0 .6H10M0 4H10M0 7.4H10" stroke="#d8d8d8" stroke-width="1.1"/></svg>
<div style="left:1598.5px;top:452.5px;width:275px;height:17px;background:#464646;border-radius:3px;border:1px solid #5a5a5a;"></div>
<span class="t" style="left:1601.00px;top:453.30px;font-size:12px;line-height:16px;color:#e8e8e8;letter-spacing:0.190px;">Bright</span>
<svg style="left:1860px;top:458.5px;" width="9" height="6" viewBox="0 0 9 6"><path d="M.8 .8 L4.5 4.5 L8.2 .8" fill="none" stroke="#d0d0d0" stroke-width="1.1"/></svg>
<div style="left:1880.0px;top:459.8px;width:2px;height:2px;background:#d0d0d0;"></div>
<div style="left:1884.7px;top:459.8px;width:2px;height:2px;background:#d0d0d0;"></div>
<div style="left:1889.4px;top:459.8px;width:2px;height:2px;background:#d0d0d0;"></div>
<div style="left:1598px;top:470.2px;width:297px;height:64.5px;background:#2a2a2a;"></div>
<div style="left:1600px;top:472px;width:18px;height:18px;background:#a360bf;border-radius:3px;"></div>
<div style="left:1622px;top:472px;width:18px;height:18px;background:#05c7f2;border-radius:3px;"></div>
<div style="left:1644px;top:472px;width:18px;height:18px;background:#f2e205;border-radius:3px;"></div>
<div style="left:1666px;top:472px;width:18px;height:18px;background:#f27405;border-radius:3px;"></div>
<div style="left:1688px;top:472px;width:18px;height:18px;background:#f20505;border-radius:3px;"></div>
<div style="left:1593px;top:541px;width:321px;height:22px;background:#1e1e1e;"></div>
<div style="left:1593px;top:541px;width:38px;height:23px;background:#464646;border-radius:4px 4px 0 0;"></div>
<span class="t" style="left:1598.00px;top:544.50px;font-size:12px;line-height:16px;color:#e8e8e8;letter-spacing:0.163px;">Align</span>
<div style="left:1593px;top:563px;width:321px;height:67.7px;background:#464646;"></div>
<span class="t" style="left:1601.00px;top:575.00px;font-size:12px;line-height:16px;color:#e4e4e4;letter-spacing:0.069px;">Alignment</span>
<span class="t" style="left:1601.00px;top:603.00px;font-size:12px;line-height:16px;color:#e4e4e4;letter-spacing:0.289px;">Distribution</span>
<div style="left:1790px;top:573px;width:53.3px;height:17.6px;background:#2b2b2b;border-radius:3px;border:1px solid #1b1b1b;"></div>
<div style="left:1807.5px;top:574px;width:1px;height:15.6px;background:#1b1b1b;"></div>
<div style="left:1825px;top:574px;width:1px;height:15.6px;background:#1b1b1b;"></div>
<div style="left:1852px;top:573px;width:53.3px;height:17.6px;background:#2b2b2b;border-radius:3px;border:1px solid #1b1b1b;"></div>
<div style="left:1869.5px;top:574px;width:1px;height:15.6px;background:#1b1b1b;"></div>
<div style="left:1887px;top:574px;width:1px;height:15.6px;background:#1b1b1b;"></div>
<div style="left:1790px;top:601px;width:53.3px;height:17.6px;background:#2b2b2b;border-radius:3px;border:1px solid #1b1b1b;"></div>
<div style="left:1807.5px;top:602px;width:1px;height:15.6px;background:#1b1b1b;"></div>
<div style="left:1825px;top:602px;width:1px;height:15.6px;background:#1b1b1b;"></div>
<svg style="left:1793.0px;top:575.7px;" width="13" height="12" viewBox="0 0 13 12"><path d="M1 0V12" stroke="#e4e4e4" stroke-width="1.3"/><path d="M3 3.5H9M3 8.5H12" stroke="#e4e4e4" stroke-width="1.8"/></svg>
<svg style="left:1810.5px;top:575.7px;" width="13" height="12" viewBox="0 0 13 12"><path d="M6.5 0V12" stroke="#e4e4e4" stroke-width="1.3"/><path d="M3 3.5H10M1 8.5H12" stroke="#e4e4e4" stroke-width="1.8"/></svg>
<svg style="left:1828.0px;top:575.7px;" width="13" height="12" viewBox="0 0 13 12"><path d="M12 0V12" stroke="#e4e4e4" stroke-width="1.3"/><path d="M4 3.5H10M1 8.5H10" stroke="#e4e4e4" stroke-width="1.8"/></svg>
<svg style="left:1855.0px;top:575.7px;" width="13" height="12" viewBox="0 0 13 12"><path d="M0 1H13" stroke="#e4e4e4" stroke-width="1.3"/><path d="M4 3V12M9 3V8" stroke="#e4e4e4" stroke-width="1.8"/></svg>
<svg style="left:1872.5px;top:575.7px;" width="13" height="12" viewBox="0 0 13 12"><path d="M0 6H13" stroke="#e4e4e4" stroke-width="1.3"/><path d="M4 1V11M9 3V9" stroke="#e4e4e4" stroke-width="1.8"/></svg>
<svg style="left:1890.0px;top:575.7px;" width="13" height="12" viewBox="0 0 13 12"><path d="M0 11.3H13" stroke="#e4e4e4" stroke-width="1.3"/><path d="M4 4V10M9 0V10" stroke="#e4e4e4" stroke-width="1.8"/></svg>
<svg style="left:1793.0px;top:603.7px;" width="13" height="12" viewBox="0 0 13 12"><path d="M1 0V12" stroke="#e4e4e4" stroke-width="1.3"/><path d="M6.5 2V10" stroke="#e4e4e4" stroke-width="2.4"/></svg>
<svg style="left:1810.5px;top:603.7px;" width="13" height="12" viewBox="0 0 13 12"><path d="M1 1H12M1 11H12" stroke="#e4e4e4" stroke-width="1.2"/><path d="M3 6H10" stroke="#e4e4e4" stroke-width="2"/></svg>
<svg style="left:1828.0px;top:603.7px;" width="13" height="12" viewBox="0 0 13 12"><path d="M0 3V0H3M10 0H13V3M13 9V12H10M3 12H0V9" stroke="#e4e4e4" stroke-width="1" fill="none" stroke-dasharray="2 1"/><rect x="3" y="7" width="2.5" height="3" fill="#e4e4e4"/><rect x="6" y="4" width="2" height="3" fill="#e4e4e4"/><rect x="8.5" y="2" width="2.5" height="2.5" fill="#e4e4e4"/></svg>
<div style="left:494px;top:637px;width:1420px;height:22px;background:#1e1e1e;"></div>
<div style="left:494px;top:637px;width:89px;height:23px;background:#464646;border-radius:4px 4px 0 0;"></div>
<span class="t" style="left:499.50px;top:640.80px;font-size:12px;line-height:16px;color:#e8e8e8;letter-spacing:-0.171px;">Scene Window</span>
<div style="left:584px;top:637px;width:99.8px;height:22px;background:#2a2a2a;border-radius:4px 4px 0 0;"></div>
<span class="t" style="left:589.50px;top:640.80px;font-size:12px;line-height:16px;color:#e0e0e0;letter-spacing:-0.100px;">JavaScript Editor</span>
<div style="left:685px;top:637px;width:112px;height:22px;background:#2a2a2a;border-radius:4px 4px 0 0;"></div>
<span class="t" style="left:690.50px;top:640.80px;font-size:12px;line-height:16px;color:#e0e0e0;letter-spacing:-0.192px;">Dependency Graph</span>
<div style="left:494px;top:658.8px;width:1420px;height:1.4px;background:#3ecf7a;"></div>
<div style="left:494px;top:660.2px;width:1420px;height:338px;background:#1e1e1e;"></div>
<div style="left:494px;top:661px;width:5px;height:20px;background:#303030;"></div>
<div style="left:499px;top:661.5px;width:1410.5px;height:19.5px;background:#464646;border-radius:4px;"></div>
<span class="t" style="left:1165.50px;top:663.00px;font-size:12px;line-height:16px;color:#e4e4e4;letter-spacing:-0.055px;">Composition 1</span>
<div style="left:494px;top:681px;width:698.5px;height:24px;background:#464646;"></div>
<div style="left:496.5px;top:683.5px;width:488px;height:19.5px;background:#2b2b2b;border-radius:10px;"></div>
<svg style="left:500.5px;top:687px;" width="13" height="13" viewBox="0 0 13 13"><circle cx="5.5" cy="5.5" r="4.6" fill="none" stroke="#d8d8d8" stroke-width="1.2"/><path d="M9 9 L12 12" stroke="#d8d8d8" stroke-width="1.6"/></svg>
<span class="t" style="left:520.00px;top:685.50px;font-size:12px;line-height:16px;color:#8c8c8c;letter-spacing:-0.244px;">Enter a layer name</span>
<div style="left:987.2px;top:683px;width:19.2px;height:19.3px;background:#2b2b2b;border-radius:3px;border:1px solid #1b1b1b;"></div>
<svg style="left:991.5px;top:687.5px;" width="11" height="11" viewBox="0 0 11 11"><path d="M5.5 0V11M0 5.5H11" stroke="#eee" stroke-width="1.7"/></svg>
<svg style="left:1002px;top:698px;" width="3" height="3" viewBox="0 0 3 3"><path d="M3 0V3H0Z" fill="#3ecf7a"/></svg>
<div style="left:1031px;top:683px;width:19.3px;height:19.3px;background:#2b2b2b;border-radius:3px;border:1px solid #1b1b1b;"></div>
<div style="left:1053.3px;top:683px;width:19.3px;height:19.3px;background:#2b2b2b;border-radius:3px;border:1px solid #1b1b1b;"></div>
<div style="left:1075.3px;top:683px;width:19.3px;height:19.3px;background:#2b2b2b;border-radius:3px;border:1px solid #1b1b1b;"></div>
<svg style="left:1033.5px;top:685.5px;" width="14" height="14" viewBox="0 0 14 14"><circle cx="5" cy="10" r="3.5" fill="#6a6a6a"/><circle cx="6.5" cy="8" r="4" fill="#9a9a9a"/><circle cx="9" cy="5" r="4.5" fill="#e0e0e0"/></svg>
<svg style="left:1056.5px;top:686px;" width="13" height="13" viewBox="0 0 13 13"><circle cx="2" cy="2.5" r="1.1" fill="#e0e0e0"/><circle cx="8.5" cy="1.5" r="1.1" fill="#e0e0e0"/><circle cx="2" cy="8" r="1.1" fill="#e0e0e0"/><path d="M8 3.7Q8.5 7.5 12.3 8Q8.5 8.5 8 12.3Q7.5 8.5 3.7 8Q7.5 7.5 8 3.7Z" fill="#e8e8e8"/><path d="M13 10v3h-3z" fill="#7ecfb3"/></svg>
<svg style="left:1078.2px;top:686px;" width="13" height="13" viewBox="0 0 13 13"><path d="M0 2H13M0 6.5H13M0 11H13" stroke="#d0d0d0" stroke-width="1" stroke-dasharray="3 1.5"/><circle cx="8" cy="2" r="1.6" fill="#2b2b2b" stroke="#e0e0e0"/><circle cx="4" cy="6.5" r="1.6" fill="#2b2b2b" stroke="#e0e0e0"/><circle cx="7" cy="11" r="1.6" fill="#2b2b2b" stroke="#e0e0e0"/><path d="M13 10v3h-3z" fill="#3ecf7a"/></svg>
<div style="left:1096.8px;top:683px;width:94.7px;height:19.5px;background:#2b2b2b;border-radius:3px;"></div>
<span class="t" style="left:1101.50px;top:685.50px;font-size:12px;line-height:16px;color:#5a5a5a;letter-spacing:-0.184px;">F</span>
<span class="t" style="left:1114.70px;top:685.50px;font-size:12px;line-height:16px;color:#e8e8e8;letter-spacing:-0.430px;">26</span>
<div style="left:494px;top:705px;width:698.5px;height:19.5px;background:#464646;"></div>
<svg style="left:501px;top:707.5px;" width="9" height="12" viewBox="0 0 9 12"><rect x="0" y="5" width="9" height="7" rx="1" fill="#d8d8d8"/><path d="M2 5V3.2A2.5 2.5 0 0 1 7 3.2V5" fill="none" stroke="#d8d8d8" stroke-width="1.3"/><rect x="3.8" y="7.5" width="1.4" height="2.5" fill="#464646"/></svg>
<svg style="left:517.3px;top:709px;" width="14" height="10" viewBox="0 0 14 10"><path d="M.6 5 Q7 -2.6 13.4 5 Q7 12.6 .6 5Z" fill="none" stroke="#d8d8d8" stroke-width="1.1"/><circle cx="7" cy="5" r="2.2" fill="#d8d8d8"/></svg>
<svg style="left:536.5px;top:707.5px;" width="13" height="13" viewBox="0 0 13 13"><path d="M6.5 .6 L12.4 3.5 V9.5 L6.5 12.4 L.6 9.5 V3.5Z M.6 3.5 L6.5 6.5 L12.4 3.5 M6.5 6.5 V12.4" fill="none" stroke="#d8d8d8" stroke-width="1.1" stroke-linejoin="round"/></svg>
<svg style="left:555px;top:708px;" width="15" height="12" viewBox="0 0 15 12"><path d="M0 4H3L7 .5V11.5L3 8H0Z" fill="#d8d8d8"/><path d="M9 3.5Q10.8 6 9 8.5M11.3 1.5Q14.5 6 11.3 10.5" stroke="#d8d8d8" stroke-width="1.2" fill="none"/></svg>
<svg style="left:574.5px;top:707.5px;" width="13" height="13" viewBox="0 0 13 13"><path d="M9.2 1.2 a1.9 1.9 0 0 1 2.7 2.7 L9.8 6 L7.1 3.3Z M7.6 4.6 L2.2 10 L1.2 12 L3.2 11 L8.6 5.6" fill="#a8a8a8" stroke="#a8a8a8" stroke-width=".8"/></svg>
<svg style="left:593.3px;top:709.5px;" width="14" height="10" viewBox="0 0 14 10"><path d="M0 5 L3.8 .8 H14 V9.2 H3.8Z" fill="#d8d8d8"/><circle cx="4.5" cy="5" r="1.1" fill="#464646"/></svg>
<span class="t" style="left:649.30px;top:706.50px;font-size:12px;line-height:16px;color:#e4e4e4;letter-spacing:-0.254px;">Name</span>
<div style="left:494px;top:723.2px;width:698px;height:132.3px;background:#3a3a3a;"></div>
<div style="left:494px;top:855.5px;width:687px;height:108px;background:#2a2a2a;"></div>
<div style="left:494px;top:768.3px;width:683px;height:19.4px;background:#46524a;border-radius:0 4px 4px 0;"></div>
<div style="left:496px;top:725.3px;width:17.4px;height:17.4px;background:#2b2b2b;border-radius:3px;"></div>
<div style="left:514.7px;top:725.3px;width:18px;height:17.4px;background:#2b2b2b;border-radius:3px;"></div>
<div style="left:534px;top:725.3px;width:17.8px;height:17.4px;background:#2b2b2b;border-radius:3px;"></div>
<svg style="left:517.3px;top:729px;" width="14" height="10" viewBox="0 0 14 10"><path d="M.6 5 Q7 -2.6 13.4 5 Q7 12.6 .6 5Z" fill="none" stroke="#e0e0e0" stroke-width="1.1"/><circle cx="7" cy="5" r="2.2" fill="#e0e0e0"/></svg>
<div style="left:572.7px;top:726px;width:16.7px;height:16.2px;background:#b892f8;border-radius:2.5px;"></div>
<svg style="left:593.3px;top:729px;" width="14" height="10" viewBox="0 0 14 10"><path d="M0 5 L3.8 .8 H14 V9.2 H3.8Z" fill="#e0e0e0"/><circle cx="4.5" cy="5" r="1.1" fill="#3a3a3a"/></svg>
<div style="left:496px;top:747.3px;width:17.4px;height:17.4px;background:#2b2b2b;border-radius:3px;"></div>
<div style="left:514.7px;top:747.3px;width:18px;height:17.4px;background:#2b2b2b;border-radius:3px;"></div>
<svg style="left:517.7px;top:749.5px;" width="12" height="12" viewBox="0 0 12 12"><circle cx="6" cy="6.5" r="4.6" fill="none" stroke="#e0e0e0" stroke-width="1.2"/><path d="M3.6 6.6 L5.6 8.6 L10.8 2.4" fill="none" stroke="#e0e0e0" stroke-width="1.3"/></svg>
<div style="left:572.7px;top:748px;width:16.7px;height:16.2px;background:#c8ef7a;border-radius:2.5px;"></div>
<svg style="left:593.3px;top:751px;" width="14" height="10" viewBox="0 0 14 10"><path d="M0 5 L3.8 .8 H14 V9.2 H3.8Z" fill="#e0e0e0"/><circle cx="4.5" cy="5" r="1.1" fill="#3a3a3a"/></svg>
<div style="left:496px;top:769.3px;width:17.4px;height:17.4px;background:#3c4740;border-radius:3px;"></div>
<div style="left:514.7px;top:769.3px;width:18px;height:17.4px;background:#3c4740;border-radius:3px;"></div>
<svg style="left:517.7px;top:771.5px;" width="12" height="12" viewBox="0 0 12 12"><circle cx="6" cy="6.5" r="4.6" fill="none" stroke="#8a8a8a" stroke-width="1.2"/><path d="M3.6 6.6 L5.6 8.6 L10.8 2.4" fill="none" stroke="#8a8a8a" stroke-width="1.3"/></svg>
<div style="left:572.7px;top:770px;width:16.7px;height:16.2px;background:#5a9e78;border-radius:2.5px;"></div>
<svg style="left:593.3px;top:773px;" width="14" height="10" viewBox="0 0 14 10"><path d="M0 5 L3.8 .8 H14 V9.2 H3.8Z" fill="#8c8c8c"/><circle cx="4.5" cy="5" r="1.1" fill="#3a3a3a"/></svg>
<div style="left:496px;top:791.3px;width:17.4px;height:17.4px;background:#2b2b2b;border-radius:3px;"></div>
<div style="left:514.7px;top:791.3px;width:18px;height:17.4px;background:#2b2b2b;border-radius:3px;"></div>
<svg style="left:517.7px;top:793.5px;" width="12" height="12" viewBox="0 0 12 12"><circle cx="6" cy="6.5" r="4.6" fill="none" stroke="#8a8a8a" stroke-width="1.2"/><path d="M3.6 6.6 L5.6 8.6 L10.8 2.4" fill="none" stroke="#8a8a8a" stroke-width="1.3"/></svg>
<div style="left:572.7px;top:792px;width:16.7px;height:16.2px;background:#8a9a60;border-radius:2.5px;"></div>
<svg style="left:593.3px;top:795px;" width="14" height="10" viewBox="0 0 14 10"><path d="M0 5 L3.8 .8 H14 V9.2 H3.8Z" fill="#8c8c8c"/><circle cx="4.5" cy="5" r="1.1" fill="#3a3a3a"/></svg>
<div style="left:496px;top:835.3px;width:17.4px;height:17.4px;background:#2b2b2b;border-radius:3px;"></div>
<div style="left:514.7px;top:835.3px;width:18px;height:17.4px;background:#2b2b2b;border-radius:3px;"></div>
<div style="left:534px;top:835.3px;width:17.8px;height:17.4px;background:#2b2b2b;border-radius:3px;"></div>
<svg style="left:517.3px;top:839px;" width="14" height="10" viewBox="0 0 14 10"><path d="M.6 5 Q7 -2.6 13.4 5 Q7 12.6 .6 5Z" fill="none" stroke="#e0e0e0" stroke-width="1.1"/><circle cx="7" cy="5" r="2.2" fill="#e0e0e0"/></svg>
<div style="left:572.7px;top:836px;width:16.7px;height:16.2px;background:#6890e8;border-radius:2.5px;"></div>
<svg style="left:593.3px;top:839px;" width="14" height="10" viewBox="0 0 14 10"><path d="M0 5 L3.8 .8 H14 V9.2 H3.8Z" fill="#e0e0e0"/><circle cx="4.5" cy="5" r="1.1" fill="#3a3a3a"/></svg>
<div style="left:610.7px;top:725.3px;width:14.5px;height:17.4px;background:#333;border-radius:3px;"></div>
<div style="left:627px;top:725.3px;width:14.6px;height:17.4px;background:#363636;border-radius:3px;"></div>
<svg style="left:613.5px;top:731.5px;" width="9" height="6" viewBox="0 0 9 6"><path d="M.8 .8 L4.5 4.5 L8.2 .8" fill="none" stroke="#a8a8a8" stroke-width="1.1"/></svg>
<svg style="left:647px;top:726px;" width="16" height="16" viewBox="0 0 16 16"><rect x="1.5" y="1.5" width="13" height="13" fill="none" stroke="#d0d0d0" stroke-width="1" stroke-dasharray="9.5 3.5" stroke-dashoffset="-1.8"/><path d="M4.5 4.5H11.5V6.6H9.1V12H6.9V6.6H4.5Z" fill="#e8d060"/><rect x="0" y="0" width="2" height="2" fill="#e8e8e8"/><rect x="0" y="14" width="2" height="2" fill="#e8e8e8"/><rect x="14" y="0" width="2" height="2" fill="#e8e8e8"/><rect x="14" y="14" width="2" height="2" fill="#e8e8e8"/></svg>
<span class="t" style="left:667.00px;top:726.50px;font-size:12px;line-height:16px;color:#ececec;letter-spacing:-0.140px;">Jumping Text</span>
<div style="left:629.5px;top:747.5px;width:15px;height:17.4px;background:#333;border-radius:3px;"></div>
<svg style="left:632.5px;top:753.5px;" width="9" height="6" viewBox="0 0 9 6"><path d="M.8 .8 L4.5 4.5 L8.2 .8" fill="none" stroke="#a8a8a8" stroke-width="1.1"/></svg>
<div style="left:658.2px;top:740.6px;width:202.5px;height:31.6px;background:#2a2a2a;border:3px solid #b9e11e;"></div>
<svg style="left:667.5px;top:751px;" width="13" height="11" viewBox="0 0 13 11"><rect x="0" y="0" width="13" height="2.6" fill="#8fe08f"/><rect x="0" y="4.4" width="13" height="2" fill="#dcdcdc"/><rect x="0" y="8.8" width="13" height="2" fill="#dcdcdc"/></svg>
<span class="t" style="left:686.00px;top:748.50px;font-size:12px;line-height:16px;color:#ececec;letter-spacing:-0.160px;">Sub-Mesh [Jumping Text]</span>
<svg style="left:687px;top:771px;" width="14" height="13" viewBox="0 0 14 13"><rect x="0" y="4.5" width="8" height="8.5" fill="#6f97c4"/><path d="M5 1H14M7.5 4H14" stroke="#8a8a8a" stroke-width="1.1"/></svg>
<span class="t" style="left:705.30px;top:770.50px;font-size:12px;line-height:16px;color:#8a8a8a;letter-spacing:0.034px;text-decoration:line-through;">Color Array</span>
<div style="left:648.3px;top:791.3px;width:14.5px;height:17.4px;background:#353535;border-radius:3px;"></div>
<div style="left:664.5px;top:791.3px;width:14.6px;height:17.4px;background:#353535;border-radius:3px;"></div>
<svg style="left:651px;top:797.5px;" width="9" height="6" viewBox="0 0 9 6"><path d="M.8 .8 L4.5 4.5 L8.2 .8" fill="none" stroke="#666" stroke-width="1.1"/></svg>
<div style="left:669px;top:797.5px;width:5.6px;height:5.6px;background:#8a8a8a;border-radius:3px;"></div>
<svg style="left:687.5px;top:793px;" width="12" height="15" viewBox="0 0 12 15"><path d="M2.5 1H9.5L6.5 5.5H5.5Z" fill="#5a9e78"/><path d="M6 5.5V14" stroke="#5a9e78" stroke-width="1.6"/><path d="M.5 6V10M11.5 6V10" stroke="#8a8a8a" stroke-width="1" stroke-dasharray="1 1"/></svg>
<span class="t" style="left:705.30px;top:792.50px;font-size:12px;line-height:16px;color:#8a8a8a;letter-spacing:-0.206px;text-decoration:line-through;">Frame [Position.X]</span>
<svg style="left:671px;top:811px;" width="12" height="13" viewBox="0 0 12 13"><path d="M1.5 0V11.5H11" fill="none" stroke="#c8c8c8" stroke-width="1" stroke-dasharray="1 1"/></svg>
<span class="t" style="left:685.50px;top:814.50px;font-size:12px;line-height:16px;color:#ececec;letter-spacing:0.117px;">Offset</span>
<div style="left:1081px;top:814px;width:84px;height:15.6px;background:#2f2f2f;border-radius:3px;"></div>
<span class="t" style="left:1085.50px;top:814.50px;font-size:12px;line-height:16px;color:#6a6a6a;letter-spacing:-0.167px;">#</span>
<span class="t" style="left:1098.20px;top:814.50px;font-size:12px;line-height:16px;color:#e4e4e4;letter-spacing:0.071px;">-1200.0</span>
<svg style="left:1152px;top:817.2px;" width="9" height="9" viewBox="0 0 9 9"><path d="M4.5 .3L8.7 4.5L4.5 8.7L.3 4.5Z" fill="#d8d8d8"/></svg>
<div style="left:1165px;top:814px;width:10px;height:15.6px;background:#353535;border-radius:0 3px 3px 0;"></div>
<svg style="left:1166.5px;top:817.8px;" width="7" height="8" viewBox="0 0 7 8"><path d="M.5 .5H2.5L6.5 4L2.5 7.5H.5Z" fill="#9a9a9a"/></svg>
<svg style="left:705px;top:837px;" width="14" height="14" viewBox="0 0 14 14"><circle cx="7" cy="7" r="6.2" fill="none" stroke="#e0e0e0" stroke-width="1.1" stroke-dasharray="2.2 1.5"/><circle cx="7" cy="7" r="2.8" fill="#a9cff5"/></svg>
<span class="t" style="left:724.50px;top:836.50px;font-size:12px;line-height:16px;color:#ececec;letter-spacing:-0.110px;">Falloff [Sub-Mesh [Jumping Text]]</span>
<div style="left:1139.3px;top:726px;width:10px;height:16.5px;background:#363636;border-radius:3px 0 0 3px;"></div>
<div style="left:1149.8px;top:726px;width:10px;height:16.5px;background:#363636;border-radius:0 3px 3px 0;"></div>
<svg style="left:1140.5px;top:729.7px;" width="7" height="8" viewBox="0 0 7 8"><path d="M6.5 .5H4.5L.5 4L4.5 7.5H6.5Z" fill="#8e7e54"/></svg>
<svg style="left:1151.5px;top:729.7px;" width="7" height="8" viewBox="0 0 7 8"><path d="M.5 .5H2.5L6.5 4L2.5 7.5H.5Z" fill="#5c5c5c"/></svg>
<svg style="left:1165px;top:728.9px;" width="10" height="10" viewBox="0 0 10 10"><circle cx="4.8" cy="4.8" r="4" fill="none" stroke="#9c9c9c" stroke-width="1"/></svg>
<div style="left:1139.3px;top:748px;width:10px;height:16.5px;background:#363636;border-radius:3px 0 0 3px;"></div>
<div style="left:1149.8px;top:748px;width:10px;height:16.5px;background:#363636;border-radius:0 3px 3px 0;"></div>
<svg style="left:1140.5px;top:751.7px;" width="7" height="8" viewBox="0 0 7 8"><path d="M6.5 .5H4.5L.5 4L4.5 7.5H6.5Z" fill="#8e7e54"/></svg>
<svg style="left:1151.5px;top:751.7px;" width="7" height="8" viewBox="0 0 7 8"><path d="M.5 .5H2.5L6.5 4L2.5 7.5H.5Z" fill="#9046ae"/></svg>
<svg style="left:1165px;top:750.9px;" width="10" height="10" viewBox="0 0 10 10"><circle cx="4.8" cy="4.8" r="4" fill="none" stroke="#9c9c9c" stroke-width="1"/></svg>
<div style="left:1139.3px;top:792px;width:10px;height:16.5px;background:#363636;border-radius:3px 0 0 3px;"></div>
<div style="left:1149.8px;top:792px;width:10px;height:16.5px;background:#363636;border-radius:0 3px 3px 0;"></div>
<svg style="left:1140.5px;top:795.7px;" width="7" height="8" viewBox="0 0 7 8"><path d="M6.5 .5H4.5L.5 4L4.5 7.5H6.5Z" fill="#5a5a5a"/></svg>
<svg style="left:1151.5px;top:795.7px;" width="7" height="8" viewBox="0 0 7 8"><path d="M.5 .5H2.5L6.5 4L2.5 7.5H.5Z" fill="#9046ae"/></svg>
<svg style="left:1165px;top:794.9px;" width="10" height="10" viewBox="0 0 10 10"><circle cx="4.8" cy="4.8" r="4" fill="none" stroke="#9c9c9c" stroke-width="1"/></svg>
<div style="left:1139.3px;top:836px;width:10px;height:16.5px;background:#363636;border-radius:3px 0 0 3px;"></div>
<div style="left:1149.8px;top:836px;width:10px;height:16.5px;background:#363636;border-radius:0 3px 3px 0;"></div>
<svg style="left:1140.5px;top:839.7px;" width="7" height="8" viewBox="0 0 7 8"><path d="M6.5 .5H4.5L.5 4L4.5 7.5H6.5Z" fill="#8e7e54"/></svg>
<svg style="left:1151.5px;top:839.7px;" width="7" height="8" viewBox="0 0 7 8"><path d="M.5 .5H2.5L6.5 4L2.5 7.5H.5Z" fill="#9046ae"/></svg>
<svg style="left:1165px;top:838.9px;" width="10" height="10" viewBox="0 0 10 10"><circle cx="4.8" cy="4.8" r="4" fill="none" stroke="#9c9c9c" stroke-width="1"/></svg>
<svg style="left:1122.5px;top:795.5px;" width="9" height="9" viewBox="0 0 9 9"><circle cx="4.5" cy="4.5" r="3.7" fill="none" stroke="#9a9a9a" stroke-width="1"/><path d="M2 7L7 2" stroke="#9a9a9a" stroke-width="1"/></svg>
<div style="left:1181px;top:724px;width:11px;height:240px;background:#2a2a2a;"></div>
<div style="left:1181.3px;top:725px;width:9.4px;height:235.5px;background:#555;border-radius:5px;"></div>
<div style="left:494.5px;top:964.2px;width:683.5px;height:9.4px;background:#555;border-radius:5px;"></div>
<div style="left:1195.3px;top:834.0px;width:1.4px;height:1.1px;background:#7a7a7a;"></div>
<div style="left:1195.3px;top:836.2px;width:1.4px;height:1.1px;background:#7a7a7a;"></div>
<div style="left:1195.3px;top:838.4px;width:1.4px;height:1.1px;background:#7a7a7a;"></div>
<div style="left:1195.3px;top:840.6px;width:1.4px;height:1.1px;background:#7a7a7a;"></div>
<div style="left:1195.3px;top:842.8px;width:1.4px;height:1.1px;background:#7a7a7a;"></div>
<div style="left:1195.3px;top:845.0px;width:1.4px;height:1.1px;background:#7a7a7a;"></div>
<div style="left:1195.3px;top:847.2px;width:1.4px;height:1.1px;background:#7a7a7a;"></div>
<div style="left:1195.3px;top:849.4px;width:1.4px;height:1.1px;background:#7a7a7a;"></div>
<div style="left:494px;top:976px;width:698.5px;height:22px;background:#464646;"></div>
<div style="left:497.3px;top:977.2px;width:19.2px;height:19.3px;background:#2b2b2b;border-radius:3px;border:1px solid #1b1b1b;"></div>
<svg style="left:500px;top:982.5px;" width="14" height="10" viewBox="0 0 14 10"><path d="M0 5 L3.8 .8 H14 V9.2 H3.8Z" fill="#e0e0e0"/><circle cx="4.5" cy="5" r="1.1" fill="#2b2b2b"/></svg>
<span class="t" style="left:520.70px;top:979.50px;font-size:12px;line-height:16px;color:#e4e4e4;letter-spacing:-0.290px;">1 selected</span>
<div style="left:984.3px;top:977.2px;width:19.2px;height:19.3px;background:#2b2b2b;border-radius:3px;border:1px solid #1b1b1b;"></div>
<svg style="left:988.5px;top:981.5px;" width="11" height="11" viewBox="0 0 11 11"><rect x=".6" y=".6" width="9.8" height="9.8" rx="1.5" fill="none" stroke="#d8d8d8" stroke-width="1.1"/><rect x="3.7" y="3.7" width="3.6" height="3.6" fill="#d8d8d8"/></svg>
<div style="left:1007.5px;top:977.3px;width:183px;height:19.3px;background:#5a5a5a;border-radius:3px;"></div>
<div style="left:1008px;top:977.8px;width:86px;height:18.3px;background:#2b2b2b;border-radius:3px;border:1px solid #6c6c6c;"></div>
<svg style="left:1013.8px;top:982px;" width="12" height="11" viewBox="0 0 12 11"><path d="M0 1H11M2.5 5.5H9.5M1 10H12" stroke="#3ecf7a" stroke-width="1.7"/></svg>
<span class="t" style="left:1030.00px;top:979.50px;font-size:12px;line-height:16px;color:#ececec;letter-spacing:-0.019px;">Time Editor</span>
<svg style="left:1102px;top:981.5px;" width="12" height="12" viewBox="0 0 12 12"><path d="M1 0V11H12" fill="none" stroke="#c8c8c8" stroke-width="1.1"/><path d="M1 10L5.5 5.5L12 3" fill="none" stroke="#c8c8c8" stroke-width="1"/></svg>
<span class="t" style="left:1119.20px;top:979.50px;font-size:12px;line-height:16px;color:#dcdcdc;letter-spacing:-0.046px;">Graph Editor</span>
<div style="left:1200.5px;top:681px;width:713.5px;height:283px;background:#2a2a2a;"></div>
<div style="left:1543.5px;top:705px;width:363.20000000000005px;height:259px;background:#232323;"></div>
<div style="left:1906.7px;top:705px;width:6.3px;height:259px;background:#222;"></div>
<div style="left:1200.5px;top:681px;width:713.5px;height:24px;background:#232323;"></div>
<svg style="left:0px;top:0px;" width="1920" height="1029" viewBox="0 0 1920 1029"><path d="M1206.6 697.5V705M1215.0 701V705M1223.4 701V705M1231.9 701V705M1240.3 701V705M1248.7 697.5V705M1257.1 701V705M1265.6 701V705M1274.0 701V705M1282.4 701V705M1290.8 697.5V705M1299.2 701V705M1307.7 701V705M1316.1 701V705M1324.5 701V705M1332.9 697.5V705M1341.4 701V705M1349.8 701V705M1358.2 701V705M1366.6 701V705M1375.0 697.5V705M1383.5 701V705M1391.9 701V705M1400.3 701V705M1408.7 701V705M1417.2 697.5V705M1425.6 701V705M1434.0 701V705M1442.4 701V705M1450.9 701V705M1459.3 697.5V705M1467.7 701V705M1476.1 701V705M1484.5 701V705M1493.0 701V705M1501.4 697.5V705M1509.8 701V705M1518.2 701V705M1526.7 701V705M1535.1 701V705M1543.5 697.5V705M1551.9 701V705M1560.3 701V705M1568.8 701V705M1577.2 701V705M1585.6 697.5V705M1594.0 701V705M1602.5 701V705M1610.9 701V705M1619.3 701V705M1627.7 697.5V705M1636.1 701V705M1644.6 701V705M1653.0 701V705M1661.4 701V705M1669.8 697.5V705M1678.3 701V705M1686.7 701V705M1695.1 701V705M1703.5 701V705M1711.9 697.5V705M1720.4 701V705M1728.8 701V705M1737.2 701V705M1745.6 701V705M1754.1 697.5V705M1762.5 701V705M1770.9 701V705M1779.3 701V705M1787.8 701V705M1796.2 697.5V705M1804.6 701V705M1813.0 701V705M1821.4 701V705M1829.9 701V705M1838.3 697.5V705M1846.7 701V705M1855.1 701V705M1863.6 701V705M1872.0 701V705M1880.4 697.5V705M1888.8 701V705M1897.2 701V705M1905.7 701V705" stroke="#8c8c8c" stroke-width="1.4" fill="none"/></svg>
<span class="t" style="left:1202.08px;top:682.20px;font-size:12px;line-height:16px;color:#dedede;letter-spacing:-0.050px;">0</span>
<span class="t" style="left:1240.88px;top:682.20px;font-size:12px;line-height:16px;color:#dedede;letter-spacing:-0.050px;">15</span>
<span class="t" style="left:1283.00px;top:682.20px;font-size:12px;line-height:16px;color:#dedede;letter-spacing:-0.050px;">30</span>
<span class="t" style="left:1325.11px;top:682.20px;font-size:12px;line-height:16px;color:#dedede;letter-spacing:-0.050px;">45</span>
<span class="t" style="left:1367.22px;top:682.20px;font-size:12px;line-height:16px;color:#dedede;letter-spacing:-0.050px;">60</span>
<span class="t" style="left:1409.33px;top:682.20px;font-size:12px;line-height:16px;color:#dedede;letter-spacing:-0.050px;">75</span>
<span class="t" style="left:1451.45px;top:682.20px;font-size:12px;line-height:16px;color:#dedede;letter-spacing:-0.050px;">90</span>
<span class="t" style="left:1490.25px;top:682.20px;font-size:12px;line-height:16px;color:#dedede;letter-spacing:-0.050px;">105</span>
<span class="t" style="left:1532.36px;top:682.20px;font-size:12px;line-height:16px;color:#dedede;letter-spacing:-0.050px;">120</span>
<span class="t" style="left:1574.47px;top:682.20px;font-size:12px;line-height:16px;color:#dedede;letter-spacing:-0.050px;">135</span>
<span class="t" style="left:1616.58px;top:682.20px;font-size:12px;line-height:16px;color:#dedede;letter-spacing:-0.050px;">150</span>
<span class="t" style="left:1658.70px;top:682.20px;font-size:12px;line-height:16px;color:#dedede;letter-spacing:-0.050px;">165</span>
<span class="t" style="left:1700.81px;top:682.20px;font-size:12px;line-height:16px;color:#dedede;letter-spacing:-0.050px;">180</span>
<span class="t" style="left:1742.92px;top:682.20px;font-size:12px;line-height:16px;color:#dedede;letter-spacing:-0.050px;">195</span>
<span class="t" style="left:1785.03px;top:682.20px;font-size:12px;line-height:16px;color:#dedede;letter-spacing:-0.050px;">210</span>
<span class="t" style="left:1827.15px;top:682.20px;font-size:12px;line-height:16px;color:#dedede;letter-spacing:-0.050px;">225</span>
<span class="t" style="left:1869.26px;top:682.20px;font-size:12px;line-height:16px;color:#dedede;letter-spacing:-0.050px;">240</span>
<div style="left:1207px;top:705.7px;width:336.5px;height:15.4px;background:#464646;"></div>
<div style="left:1202px;top:704px;width:5px;height:17.8px;background:#7ecfb3;border-radius:1.5px;"></div>
<div style="left:1543.0px;top:704px;width:5px;height:17.8px;background:#7ecfb3;border-radius:1.5px;"></div>
<div style="left:1200.5px;top:724px;width:713.5px;height:21.5px;background:#262626;"></div>
<div style="left:1543.5px;top:724px;width:363.20000000000005px;height:21.5px;background:#202020;"></div>
<div style="left:1207px;top:724.2px;width:336.5px;height:18.4px;background:#b892f8;border-radius:3px 0 0 3px;"></div>
<div style="left:1543.5px;top:724.2px;width:363.20000000000005px;height:18.4px;background:#8468b0;border-radius:0 3px 3px 0;"></div>
<div style="left:1207px;top:746.3px;width:336.5px;height:18.2px;background:#c9ea7a;border-radius:3px 0 0 3px;background-image:repeating-linear-gradient(135deg,#e6f88e -1.06px,#e6f88e 0.14px,#cff080 0.34px,#cff080 12.14px,#bddc6d 13.54px,#bddc6d 24.24px);"></div>
<div style="left:1543.5px;top:746.3px;width:363.20000000000005px;height:18.2px;background:#94a862;border-radius:0 3px 3px 0;background-image:repeating-linear-gradient(135deg,#a9aa6a 14.00px,#a9aa6a 15.20px,#93aa63 15.40px,#93aa63 27.20px,#859a51 28.60px,#859a51 39.30px);"></div>
<div style="left:1207px;top:790.6px;width:336.5px;height:18.2px;background:#c9ea7a;border-radius:3px 0 0 3px;background-image:repeating-linear-gradient(135deg,#e6f88e -1.06px,#e6f88e 0.14px,#cff080 0.34px,#cff080 12.14px,#bddc6d 13.54px,#bddc6d 24.24px);"></div>
<div style="left:1543.5px;top:790.6px;width:363.20000000000005px;height:18.2px;background:#94a862;border-radius:0 3px 3px 0;background-image:repeating-linear-gradient(135deg,#a9aa6a 14.00px,#a9aa6a 15.20px,#93aa63 15.40px,#93aa63 27.20px,#859a51 28.60px,#859a51 39.30px);"></div>
<div style="left:1207px;top:768.4px;width:336.5px;height:18.6px;background:#94f3c0;border-radius:3px 0 0 3px;background-image:radial-gradient(circle,#3cb878 0.6px,rgba(0,0,0,0) 0.95px),radial-gradient(circle,#3cb878 0.6px,rgba(0,0,0,0) 0.95px);background-size:3px 3px;background-position:0 0,1.5px 1.5px;border:1px solid #cfe6da;border-right:none;"></div>
<div style="left:1543.5px;top:768.4px;width:363.20000000000005px;height:18.6px;background:#72c39b;border-radius:0 3px 3px 0;background-image:radial-gradient(circle,#3c9464 0.6px,rgba(0,0,0,0) 0.95px),radial-gradient(circle,#3c9464 0.6px,rgba(0,0,0,0) 0.95px);background-size:3px 3px;background-position:0 0,1.5px 1.5px;border:1px solid #cfe6da;border-left:none;"></div>
<div style="left:1207px;top:834.7px;width:336.5px;height:18.2px;background:#6890e8;border-radius:3px 0 0 3px;"></div>
<div style="left:1543.5px;top:834.7px;width:363.20000000000005px;height:18.2px;background:#4a66a6;border-radius:0 3px 3px 0;"></div>
<div style="left:1207px;top:746.3px;width:144px;height:18px;background:#cff080;border-radius:3px 0 0 3px;"></div>
<div style="left:1351px;top:746.3px;width:14px;height:18px;background:linear-gradient(to right,#cff080,rgba(207,240,128,0));"></div>
<div style="left:1207px;top:790.6px;width:107px;height:18px;background:#cff080;border-radius:3px 0 0 3px;"></div>
<div style="left:1314px;top:790.6px;width:14px;height:18px;background:linear-gradient(to right,#cff080,rgba(207,240,128,0));"></div>
<div style="left:1281px;top:769.4px;width:262.5px;height:16.6px;background-image:repeating-linear-gradient(135deg,rgba(255,255,255,.30) 0,rgba(255,255,255,.30) 1px,rgba(255,255,255,.13) 1.2px,rgba(255,255,255,.13) 13.2px,rgba(255,255,255,0) 14.6px,rgba(255,255,255,0) 25.3px);"></div>
<div style="left:1543.5px;top:769.4px;width:362.20000000000005px;height:16.6px;background-image:repeating-linear-gradient(135deg,rgba(255,255,255,.22) 0,rgba(255,255,255,.22) 1px,rgba(255,255,255,.09) 1.2px,rgba(255,255,255,.09) 13.2px,rgba(255,255,255,0) 14.6px,rgba(255,255,255,0) 25.3px);"></div>
<div style="left:1207px;top:746.6px;width:699.7px;height:18px;background:linear-gradient(to bottom,rgba(255,255,255,.10),rgba(255,255,255,0) 45%,rgba(0,0,0,.06));border-radius:3px;"></div>
<div style="left:1207px;top:790.6px;width:699.7px;height:18px;background:linear-gradient(to bottom,rgba(255,255,255,.10),rgba(255,255,255,0) 45%,rgba(0,0,0,.06));border-radius:3px;"></div>
<span class="t" style="left:1215.00px;top:725.50px;font-size:12px;line-height:16px;color:#fff;letter-spacing:0.001px;text-shadow:0 0 1px #fff;">Jumping Text</span>
<span class="t" style="left:1215.00px;top:747.50px;font-size:12px;line-height:16px;color:#2a2a2a;letter-spacing:-0.095px;">Sub-Mesh [Jumping Text]</span>
<span class="t" style="left:1215.00px;top:769.50px;font-size:12px;line-height:16px;color:#1e3a2a;letter-spacing:0.088px;">Color Array</span>
<span class="t" style="left:1215.00px;top:791.50px;font-size:12px;line-height:16px;color:#2a2a2a;letter-spacing:-0.122px;">Frame [Position.X]</span>
<span class="t" style="left:1215.00px;top:835.50px;font-size:12px;line-height:16px;color:#fff;letter-spacing:-0.050px;text-shadow:0 0 1px #fff;">Falloff [Sub-Mesh [Jumping Text]]</span>
<div style="left:1211px;top:819.5px;width:104px;height:2px;background:#c8e878;"></div>
<svg style="left:1201.5px;top:815px;" width="11" height="11" viewBox="0 0 11 11"><path d="M5.5 .8L10.2 5.5L5.5 10.2L.8 5.5Z" fill="#c2c2c2"/></svg>
<svg style="left:1313.7px;top:815px;" width="11" height="11" viewBox="0 0 11 11"><path d="M5.5 .8L10.2 5.5L5.5 10.2L.8 5.5Z" fill="#c2c2c2"/></svg>
<div style="left:1279.0949999999998px;top:700px;width:1px;height:260.5px;background:#5fae94;"></div>
<svg style="left:1272.0949999999998px;top:694.5px;" width="15" height="9" viewBox="0 0 15 9"><path d="M0 0H15L7.5 9Z" fill="#7ecfb3"/></svg>
<div style="left:1201px;top:964.2px;width:711.5px;height:9.4px;background:#555;border-radius:5px;"></div>
<div style="left:1200.5px;top:976px;width:713.5px;height:22px;background:#464646;"></div>
<div style="left:1202px;top:977.2px;width:19.2px;height:19.3px;background:#2b2b2b;border-radius:3px;border:1px solid #1b1b1b;"></div>
<svg style="left:1205px;top:981px;" width="13" height="13" viewBox="0 0 13 13"><path d="M0 1.5H13M0 6H13" stroke="#e0e0e0" stroke-width="1.7"/><path d="M0 10.5H3M5 10.5H8" stroke="#e0e0e0" stroke-width="1.7"/><path d="M13 10v3h-3z" fill="#3ecf7a"/></svg>
<div style="left:1223.5px;top:978px;width:150px;height:18.5px;background:#2b2b2b;border-radius:3px;"></div>
<span class="t" style="left:1226.20px;top:979.50px;font-size:12px;line-height:16px;color:#e8e8e8;letter-spacing:-0.094px;">Default Keyframe Layer</span>
<div style="left:1380px;top:978px;width:70px;height:18.5px;background:#2b2b2b;border-radius:3px;"></div>
<span class="t" style="left:1384.50px;top:979.50px;font-size:12px;line-height:16px;color:#555;letter-spacing:-0.184px;">F</span>
<span class="t" style="left:1397.50px;top:979.50px;font-size:12px;line-height:16px;color:#e0e0e0;letter-spacing:-0.100px;">-</span>
<span class="t" style="left:1456.00px;top:979.50px;font-size:12px;line-height:16px;color:#e4e4e4;letter-spacing:-0.055px;">Align:</span>
<div style="left:1492.5px;top:977.5px;width:52.5px;height:19px;background:#2b2b2b;border-radius:3px;border:1px solid #1b1b1b;"></div>
<div style="left:1510px;top:978.5px;width:1px;height:17px;background:#1b1b1b;"></div>
<div style="left:1527.5px;top:978.5px;width:1px;height:17px;background:#1b1b1b;"></div>
<svg style="left:1495px;top:981px;" width="13" height="12" viewBox="0 0 13 12"><path d="M1 0V12" stroke="#dcdcdc" stroke-width="1.3"/><path d="M3.5 3H6M8 3H10M3.5 9H12" stroke="#dcdcdc" stroke-width="1.7"/></svg>
<svg style="left:1512.7px;top:981px;" width="13" height="12" viewBox="0 0 13 12"><path d="M6.5 0V12" stroke="#dcdcdc" stroke-width="1.3"/><path d="M3 3H5M8 3H10M1 9H5M8 9H12" stroke="#dcdcdc" stroke-width="1.7"/></svg>
<svg style="left:1530px;top:981px;" width="13" height="12" viewBox="0 0 13 12"><path d="M12 0V12" stroke="#dcdcdc" stroke-width="1.3"/><path d="M3 3H5.5M7.5 3H10M1 9H10" stroke="#dcdcdc" stroke-width="1.7"/></svg>
<div style="left:1548.5px;top:977.5px;width:18.5px;height:19px;background:#2b2b2b;border-radius:3px;border:1px solid #1b1b1b;"></div>
<svg style="left:1551.5px;top:981px;" width="12" height="12" viewBox="0 0 12 12"><rect x="1.5" y="1.5" width="9" height="9" fill="none" stroke="#dcdcdc" stroke-width="1" stroke-dasharray="2.5 1.5"/><rect x="0" y="0" width="2.5" height="2.5" fill="#dcdcdc"/><rect x="9.5" y="0" width="2.5" height="2.5" fill="#dcdcdc"/><rect x="0" y="9.5" width="2.5" height="2.5" fill="#dcdcdc"/><rect x="9.5" y="9.5" width="2.5" height="2.5" fill="#dcdcdc"/><rect x="4.7" y="4.7" width="2.6" height="2.6" fill="#dcdcdc"/></svg>
<div style="left:1570px;top:977.5px;width:31px;height:19px;background:#2b2b2b;border-radius:3px;border:1px solid #1b1b1b;"></div>
<div style="left:1588px;top:978.5px;width:1px;height:17px;background:#1b1b1b;"></div>
<svg style="left:1573px;top:980.5px;" width="14" height="14" viewBox="0 0 14 14"><path d="M3 9 A4.5 4.5 0 1 1 10.5 5.5 L12.5 9.5" fill="none" stroke="#dcdcdc" stroke-width="2.4"/></svg>
<svg style="left:1591.5px;top:982.5px;" width="7" height="10" viewBox="0 0 7 10"><path d="M1 1.5 L6 5 L1 8.5Z" fill="none" stroke="#8a8a8a" stroke-width="1"/></svg>
<div style="left:1605px;top:977.5px;width:31px;height:19px;background:#2b2b2b;border-radius:3px;border:1px solid #1b1b1b;"></div>
<div style="left:1623px;top:978.5px;width:1px;height:17px;background:#1b1b1b;"></div>
<svg style="left:1607.5px;top:981px;" width="14" height="12" viewBox="0 0 14 12"><path d="M0 6H2.5M11.5 6H14M4 4V8M6 1.5V10.5M8 3V9M10 4.5V7.5" stroke="#dcdcdc" stroke-width="1.1"/></svg>
<svg style="left:1626.5px;top:982.5px;" width="7" height="10" viewBox="0 0 7 10"><path d="M1 1.5 L6 5 L1 8.5Z" fill="none" stroke="#8a8a8a" stroke-width="1"/></svg>
<svg style="left:1743px;top:981px;" width="14" height="14" viewBox="0 0 14 14"><circle cx="6" cy="6" r="5" fill="none" stroke="#d8d8d8" stroke-width="1.1"/><path d="M9.7 9.7L13 13" stroke="#d8d8d8" stroke-width="1.5"/><path d="M3.5 6H8.5" stroke="#d8d8d8" stroke-width="1.1"/></svg>
<svg style="left:1887px;top:981px;" width="14" height="14" viewBox="0 0 14 14"><circle cx="6" cy="6" r="5" fill="none" stroke="#d8d8d8" stroke-width="1.1"/><path d="M9.7 9.7L13 13" stroke="#d8d8d8" stroke-width="1.5"/><path d="M3.5 6H8.5" stroke="#d8d8d8" stroke-width="1.1"/><path d="M6 3.5V8.5" stroke="#d8d8d8" stroke-width="1.1"/></svg>
<div style="left:1772px;top:986.3px;width:109px;height:2.4px;background:#555;border-radius:1px;"></div>
<div style="left:1762px;top:982px;width:10px;height:10px;background:#7ecfb3;border-radius:5px;"></div>
<div style="left:1765px;top:985px;width:4px;height:4px;background:#4a9078;border-radius:2px;"></div>
<div style="left:494px;top:1003.7px;width:1420px;height:22.1px;background:#3a3a3a;"></div>
<div style="left:498px;top:1009.6px;width:2.2px;height:2.2px;background:#909090;"></div>
<div style="left:498px;top:1013.7px;width:2.2px;height:2.2px;background:#909090;"></div>
<div style="left:498px;top:1017.8000000000001px;width:2.2px;height:2.2px;background:#909090;"></div>
<div style="left:507.7px;top:1006.7px;width:16.5px;height:16.8px;background:#2b2b2b;border-radius:3px;border:1px solid #1b1b1b;"></div>
<svg style="left:509.5px;top:1008.5px;" width="16" height="16" viewBox="0 0 16 16"><path d="M.5 .5H12V9H10.5V12L7 9H.5Z" fill="#e0e0e0"/><path d="M2 2.6H10.5M2 4.8H10.5M2 7H10.5M4 1.5V8" stroke="#2b2b2b" stroke-width="1"/><path d="M14.2 11v3h-3z" fill="#7ecfb3"/></svg>
<div style="left:528px;top:1008.2px;width:18px;height:13.6px;background:#2ecc71;border-radius:2.5px;"></div>
<span class="t" style="left:533.74px;top:1007.50px;font-size:12px;line-height:16px;color:#1e3a2a;letter-spacing:-0.167px;">2</span>
<div style="left:554px;top:1012px;width:6px;height:6px;background:#2ecc71;border-radius:3px;"></div>
<span class="t" style="left:565.00px;top:1007.50px;font-size:12px;line-height:16px;color:#e4e4e4;letter-spacing:-0.250px;">Save reminder: 10 minutes since your last save.</span>
<span class="t" style="left:1360.20px;top:1007.00px;font-size:12px;line-height:16px;color:#e4e4e4;letter-spacing:-0.762px;font-style:italic;">Click to see next message</span>
<div style="left:1488px;top:1006.2px;width:79.5px;height:17.8px;background:#d8c066;border-radius:2px;"></div>
<span class="t" style="left:1493.60px;top:1007.50px;font-size:12px;line-height:16px;color:#222;letter-spacing:-0.413px;">Feedback</span>
<div style="left:1570.5px;top:1006.2px;width:109.5px;height:17.8px;background:#2ecc71;border-radius:2px;"></div>
<span class="t" style="left:1576.00px;top:1007.50px;font-size:12px;line-height:16px;color:#222;letter-spacing:-0.128px;">Upgrade to Pro</span>
<div style="left:1683px;top:1006.2px;width:118.79999999999995px;height:17.8px;background:#c090f0;border-radius:2px;"></div>
<span class="t" style="left:1688.60px;top:1007.50px;font-size:12px;line-height:16px;color:#222;letter-spacing:-0.060px;">Update Available</span>
<div style="left:1804.8px;top:1006.2px;width:106.5px;height:17.8px;background:#32a8f0;border-radius:2px;"></div>
<span class="t" style="left:1810.00px;top:1007.50px;font-size:12px;line-height:16px;color:#222;letter-spacing:-0.217px;">Tips and Tricks</span>
<svg style="left:1549px;top:1008.5px;" width="13" height="14" viewBox="0 0 13 14"><path d="M1 .5H8.5L12 4V13.5H1Z" fill="#f4f0e0" stroke="#b0a070" stroke-width=".7"/><path d="M3 5H9M3 7.5H9M3 10H7" stroke="#a8a8a8" stroke-width=".8"/><path d="M11.5 5.5L6.5 11L6 12.5L7.5 12L12.5 6.5Z" fill="#e86a3a"/></svg>
<svg style="left:1660px;top:1010px;" width="15" height="12" viewBox="0 0 15 12"><path d="M1 5Q1 1.5 4 2.5L6.5 5.5V10.5Q3 11.5 1.5 9Z" fill="#f6c945"/><path d="M14 5Q14 1.5 11 2.5L8.5 5.5V10.5Q12 11.5 13.5 9Z" fill="#f6c945"/></svg>
<svg style="left:1782px;top:1008.5px;" width="14" height="14" viewBox="0 0 14 14"><circle cx="7" cy="7.5" r="6" fill="#f6c945"/><path d="M3 3.5L7 .5L11.5 4Z" fill="#e05aa0"/><circle cx="4.8" cy="7" r=".9" fill="#5a3a1a"/><circle cx="9.2" cy="7" r=".9" fill="#5a3a1a"/><path d="M4.5 10Q7 12 9.5 10" stroke="#5a3a1a" stroke-width=".9" fill="none"/><circle cx="12" cy="11" r="1.5" fill="#4aa8e8"/></svg>
<svg style="left:1891px;top:1008.5px;" width="14" height="14" viewBox="0 0 14 14"><path d="M13.5 .5Q8 .5 4.5 6L8 9.5Q13.5 6 13.5 .5Z" fill="#e8e8f0"/><path d="M4.5 6L1.5 6.5L3.5 4.5ZM8 9.5L7.5 12.5L9.5 10.5Z" fill="#e04a4a"/><circle cx="9.7" cy="4.3" r="1.3" fill="#4aa8e8"/><path d="M3.8 8.5L1 13L5.5 10.2Z" fill="#f6a030"/></svg>
<svg style="left:0px;top:0px;" width="1920" height="1029" viewBox="0 0 1920 1029"><path d="M825 757.5 C 1000 757.5 990 778 1170 778" fill="none" stroke="#3aa6df" stroke-width="1.2"/><circle cx="825" cy="757.3" r="4.3" fill="#3db0ee"/></svg>
<div style="left:1133.3px;top:761.2px;width:51.7px;height:32.6px;border:3px solid #b9e11e;"></div>
<svg style="left:1144.2px;top:773.5px;" width="9" height="9" viewBox="0 0 9 9"><circle cx="4.5" cy="4.5" r="3.7" fill="none" stroke="#7f8a84" stroke-width="1"/><path d="M2 7L7 2" stroke="#7f8a84" stroke-width="1"/></svg>
<svg style="left:1164.5px;top:772.3px;" width="11" height="11" viewBox="0 0 11 11"><circle cx="5.5" cy="5.5" r="4.7" fill="#3db0ee"/></svg>
</body></html>
